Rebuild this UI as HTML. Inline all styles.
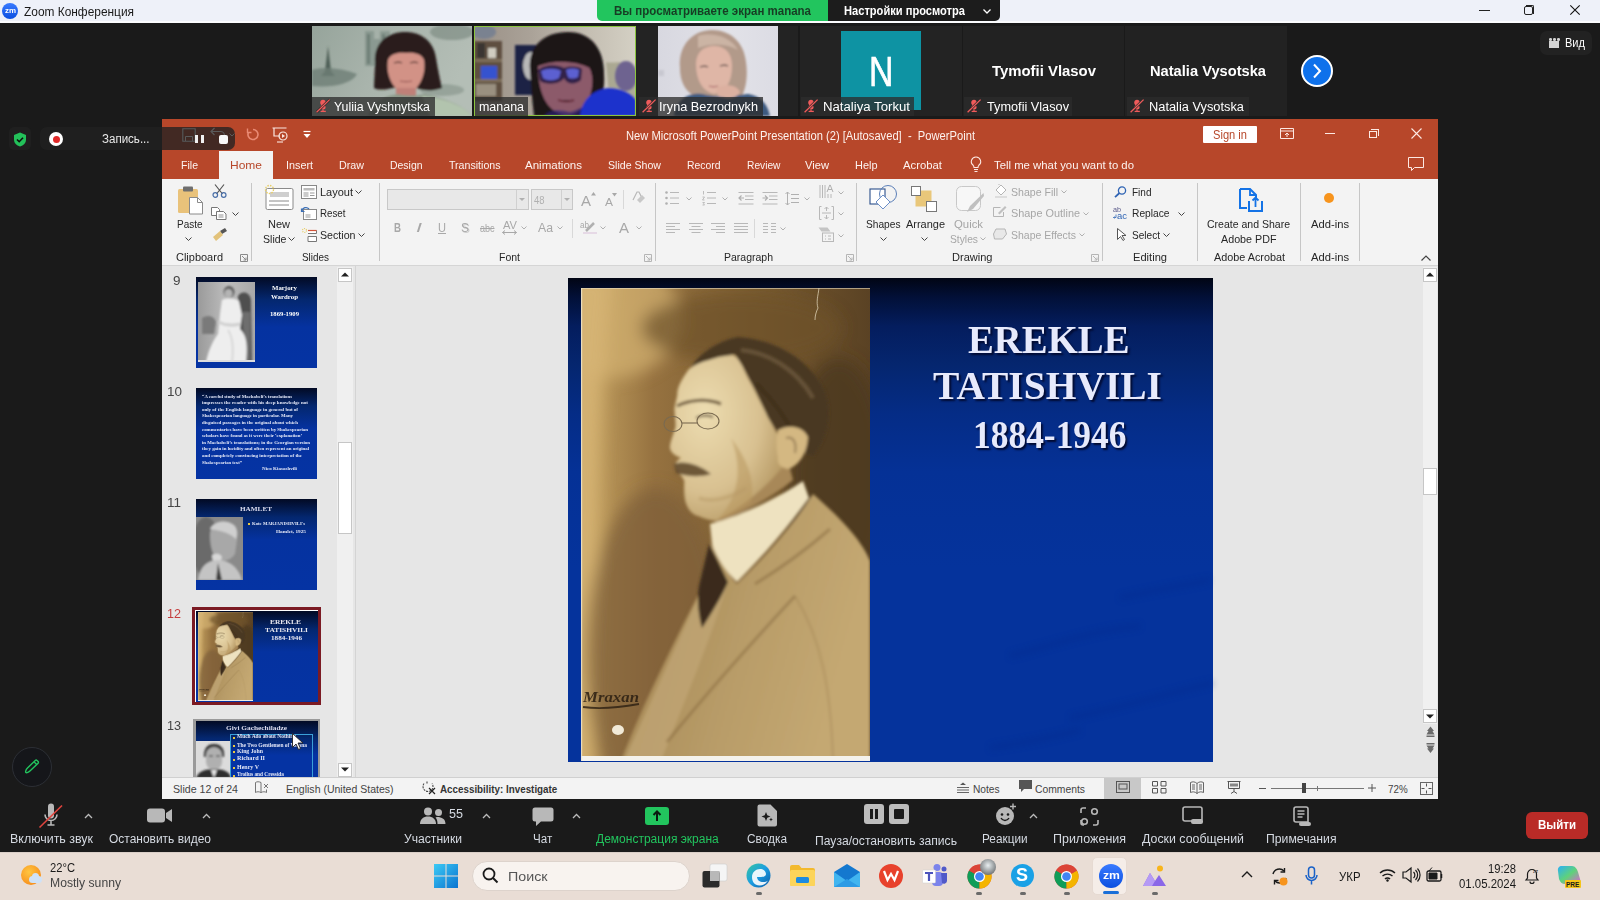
<!DOCTYPE html>
<html><head><meta charset="utf-8">
<style>
*{margin:0;padding:0;box-sizing:border-box}
html,body{width:1600px;height:900px;overflow:hidden}
body{position:relative;background:#1a1a1a;font-family:"Liberation Sans",sans-serif;color:#fff}
.a{position:absolute}
.t{position:absolute;white-space:nowrap;line-height:1;transform-origin:0 0}
svg{position:absolute;overflow:visible}
.lbl{position:absolute;top:97px;height:19px;background:rgba(44,44,44,.77)}
.nm{font-size:12.5px;color:#fff}
.rb{font-size:11px;color:#262626}
.dis{color:#a6a6a6}
.tab{font-size:11.5px;color:#fdf3f0}
.zt{font-size:12.5px;color:#d6dbe3;margin-top:.6px}
</style></head><body>

<!-- ================= Zoom title bar ================= -->
<div class="a" style="left:0;top:0;width:1600px;height:23px;background:#eef1f9"></div>
<div class="a" style="left:0;top:21px;width:1600px;height:2px;background:#fbfcfe"></div>
<div class="a" style="left:2px;top:3px;width:16px;height:16px;border-radius:50%;background:linear-gradient(#3a7bff,#0b4fe0)"></div>
<div class="t" style="left: 4.5px; top: 7px; font-size: 7px; font-weight: bold; color: rgb(255, 255, 255); transform: scaleX(1.13002);">zm</div>
<div class="t" style="left: 24px; top: 5.5px; font-size: 12px; color: rgb(26, 26, 26); transform: scaleX(0.991829);">Zoom Конференция</div>
<!-- window controls -->
<div class="a" style="left:1479px;top:10px;width:11px;height:1px;background:#222"></div>
<div class="a" style="left:1524px;top:6px;width:9px;height:9px;border:1px solid #222;border-radius:2px"></div>
<div class="a" style="left:1525.5px;top:5px;width:8.5px;height:8.5px;border-top:1px solid #222;border-right:1px solid #222;border-radius:0 2px 0 0"></div>
<svg style="left:1570px;top:5px" width="10" height="10"><path d="M0.3 0.3L9.7 9.7M9.7 0.3L0.3 9.7" stroke="#111" stroke-width="1.1"></path></svg>

<!-- green banner -->
<div class="a" style="left:597px;top:0;width:231px;height:21px;background:#22c55e;border-radius:0 0 0 5px"></div>
<div class="a" style="left:828px;top:0;width:172px;height:21px;background:#1c1c1c;border-radius:0 0 5px 0"></div>
<div class="t" style="left: 614px; top: 5px; font-size: 12px; font-weight: bold; color: rgb(23, 61, 36); transform: scaleX(0.958565);">Вы просматриваете экран manana</div>
<div class="t" style="left: 844px; top: 5px; font-size: 12px; font-weight: bold; color: rgb(255, 255, 255); transform: scaleX(0.925762);">Настройки просмотра</div>
<svg style="left:983px;top:9px" width="8" height="5"><path d="M0.5 0.5L4 4L7.5 0.5" stroke="#fff" stroke-width="1.3" fill="none"></path></svg>

<!-- ================= participant strip ================= -->
<div id="tiles">
<!-- Yuliia -->
<svg style="left:312px;top:26px;overflow:hidden" width="160" height="90">
  <defs><linearGradient id="yb" x1="0" y1="0" x2="1" y2="0.3"><stop offset="0" stop-color="#96a49b"></stop><stop offset=".5" stop-color="#a9b4ac"></stop><stop offset="1" stop-color="#b4beb6"></stop></linearGradient></defs>
  <rect width="160" height="90" fill="url(#yb)"></rect>
  <g filter="url(#bl1)">
    <path d="M16 20L13 45h6z" fill="#4e5e56"></path><path d="M9 50l7-8 7 8z" fill="#4e5e56"></path>
    <path d="M0 44C10 40 30 42 45 48 40 58 20 62 0 60z" fill="#6e7e75" opacity=".8"></path>
    <path d="M53 40V5h9v8h6V5h10v35z" fill="#7f8f86" opacity=".7"></path>
    <path d="M55 8h3v30h-3zM70 8h3v30h-3z" fill="#62726a" opacity=".7"></path>
    <ellipse cx="140" cy="6" rx="22" ry="8" fill="#76867d" opacity=".6"></ellipse>
    <ellipse cx="130" cy="64" rx="22" ry="6" fill="#7a8a80" opacity=".5"></ellipse>
    <path d="M63 36C62 16 76 6 93 6C110 6 122 16 124 32C126 44 128 54 130 62C118 66 110 64 104 62H80C72 64 66 64 62 62C62 54 63 46 63 36z" fill="#2a1f1c"></path>
    <path d="M76 34C78 28 86 26 94 27C102 26 110 28 112 34C114 46 110 62 94 70C78 62 74 46 76 34z" fill="#d29286"></path>
    <path d="M82 37c3-1 6-1 8 0M98 37c3-1 6-1 8 0" stroke="#5a3a34" stroke-width="1.2"></path>
    <path d="M88 55c4 1 8 1 12 0" stroke="#a05a58" stroke-width="1.1"></path>
    <path d="M84 62h20v8H84z" fill="#c08078"></path>
    <path d="M56 90C60 76 72 70 86 68C96 70 104 70 112 68C130 72 150 78 160 90z" fill="#8c9a8a"></path>
    <path d="M110 70C130 72 150 78 160 90H118z" fill="#b2c4ae"></path>
  </g>
</svg>
<!-- manana -->
<svg style="left:474px;top:26px;overflow:hidden" width="162" height="90">
  <defs><linearGradient id="mb" x1="0" y1="0" x2="1" y2="0"><stop offset="0" stop-color="#9a9086"></stop><stop offset=".35" stop-color="#aaa298"></stop><stop offset=".7" stop-color="#c4beb2"></stop><stop offset="1" stop-color="#d4d0c4"></stop></linearGradient></defs>
  <rect width="162" height="90" fill="url(#mb)"></rect>
  <g filter="url(#bl1)">
    <ellipse cx="10" cy="6" rx="12" ry="7" fill="#7a8290"></ellipse>
    <rect x="0" y="15" width="28" height="60" fill="#5e5040"></rect>
    <path d="M1 33h27v3H1zM1 53h27v3H1z" fill="#7e6e5a"></path>
    <rect x="3" y="17" width="8" height="15" fill="#3a3430"></rect>
    <rect x="14" y="22" width="8" height="10" fill="#d0ccc0"></rect>
    <rect x="7" y="40" width="16" height="13" fill="#3553cf"></rect>
    <rect x="2" y="58" width="20" height="12" fill="#9a9080"></rect>
    <rect x="41" y="19" width="21" height="50" fill="#1c2244"></rect>
    <ellipse cx="57" cy="40" rx="8" ry="14" fill="#b8b8b8"></ellipse>
    <path d="M132 36c6 2 12-2 18 2 6 4 10 10 12 18v24h-26z" fill="#8a8a6a" opacity=".5"></path>
    <ellipse cx="152" cy="50" rx="11" ry="15" fill="#6e6490"></ellipse>
    <path d="M56 44C54 20 70 6 94 6C118 6 130 24 130 48C131 62 128 74 122 90H60C58 74 57 58 56 44z" fill="#1b1418"></path>
    <path d="M64 40C66 30 76 28 92 30C106 30 116 36 118 50C120 68 112 86 94 90C76 88 64 72 64 40z" fill="#8c5a6a"></path>
    <path d="M62 34C72 26 96 24 118 34L116 42C100 34 80 34 64 40z" fill="#1b1418"></path>
    <path d="M64 44C70 38 84 38 90 42 96 40 104 40 108 43L107 54C102 59 93 59 90 52 86 59 72 59 66 55z" fill="#2e1e48" opacity=".95"></path>
    <path d="M67 45c6-3 15-3 20 0l-2 7c-5 3-12 3-16 0zM92 44c4-2 9-2 13 0l-1 7c-4 2-8 2-10 0z" fill="#6068e0" opacity=".9"></path>
    <path d="M84 74c6 2 12 2 16 0" stroke="#6a3040" stroke-width="2"></path>
    <path d="M70 90C76 82 88 84 96 86C104 84 110 80 112 78V90z" fill="#2a2070" opacity=".7"></path>
    <path d="M106 90C108 72 120 64 134 62C148 62 158 68 162 74V90z" fill="#1f30cc"></path>
    <rect x="0" y="0" width="162" height="90" fill="none"></rect>
  </g>
</svg>
<div class="a" style="left:474px;top:26px;width:162px;height:90px;border:1px solid #8bc53f"></div>
<!-- Iryna -->
<div class="a" style="left:636px;top:26px;width:162px;height:90px;background:#232323"></div>
<svg style="left:658px;top:26px;overflow:hidden" width="120" height="90">
  <defs><linearGradient id="ib" x1="0" y1="0" x2="1" y2="0"><stop offset="0" stop-color="#d8d8e0"></stop><stop offset=".6" stop-color="#e2e2e8"></stop><stop offset="1" stop-color="#dcdce4"></stop></linearGradient></defs>
  <rect width="120" height="90" fill="url(#ib)"></rect>
  <g filter="url(#bl1)">
    <path d="M22 42C20 18 36 4 54 4C72 4 86 16 88 36C90 50 88 62 84 70H36C26 64 22 54 22 42z" fill="#b29a8a"></path>
    <path d="M40 10C54 6 72 10 80 24C70 18 56 16 40 22z" fill="#cbb4a4"></path>
    <path d="M38 38C38 26 46 20 56 20C68 20 74 28 74 40C74 56 68 66 56 68C46 66 38 56 38 38z" fill="#dfb6a6"></path>
    <path d="M42 41c3-1 6-1 8 0M62 40c3-1 6-1 8 0" stroke="#5a4a48" stroke-width="1.3"></path>
    <path d="M51 60c3 1 6 1 9 0" stroke="#b07070" stroke-width="1.3"></path>
    <path d="M16 90C18 76 28 66 44 68C58 72 76 70 90 68C104 70 110 80 112 90z" fill="#3e5a80"></path>
    <path d="M58 62C66 58 78 58 82 66C80 72 70 74 60 70z" fill="#dcb0a0"></path>
    <rect x="0" y="44" width="6" height="6" fill="#c8c8d0"></rect>
  </g>
</svg>
<!-- Nataliya -->
<div class="a" style="left:800px;top:26px;width:162px;height:90px;background:#232323"></div>
<div class="a" style="left:841px;top:31px;width:80px;height:79px;background:#0e93a3"></div>
<div class="t" style="left: 869px; top: 51px; font-size: 42.5px; color: rgb(255, 255, 255); -webkit-text-stroke: 0.6px rgb(255, 255, 255); transform: scaleX(0.797964);">N</div>
<!-- Tymofii / Natalia -->
<div class="a" style="left:963px;top:26px;width:161px;height:90px;background:#222"></div>
<div class="a" style="left:1125px;top:26px;width:162px;height:90px;background:#222"></div>
<div class="t" style="left: 992px; top: 63px; font-size: 15.5px; font-weight: bold; color: rgb(255, 255, 255); transform: scaleX(0.960739);">Tymofii Vlasov</div>
<div class="t" style="left: 1149.5px; top: 63px; font-size: 15.5px; font-weight: bold; color: rgb(255, 255, 255); transform: scaleX(0.945853);">Natalia Vysotska</div>

<!-- labels -->
<div class="lbl" style="left:312px;width:123px"></div>
<div class="lbl" style="left:475px;width:53px"></div>
<div class="lbl" style="left:639px;width:124px"></div>
<div class="lbl" style="left:801px;width:113px"></div>
<div class="lbl" style="left:964px;width:108px"></div>
<div class="lbl" style="left:1127px;width:122px"></div>
<div class="t nm" style="left: 334px; top: 100.8px; transform: scaleX(0.991607);">Yuliia Vyshnytska</div>
<div class="t nm" style="left: 479px; top: 100.8px; transform: scaleX(0.995851);">manana</div>
<div class="t nm" style="left: 659px; top: 100.8px; transform: scaleX(1.01767);">Iryna Bezrodnykh</div>
<div class="t nm" style="left: 823px; top: 100.8px; transform: scaleX(1.05514);">Nataliya Torkut</div>
<div class="t nm" style="left: 987px; top: 100.8px; transform: scaleX(1.01745);">Tymofii Vlasov</div>
<div class="t nm" style="left: 1149px; top: 100.8px; transform: scaleX(1.02547);">Natalia Vysotska</div>
</div>
<!-- mute icons -->
<svg style="left:316px;top:99px" width="14" height="14"><use href="#mute"></use></svg>
<svg style="left:642px;top:99px" width="14" height="14"><use href="#mute"></use></svg>
<svg style="left:804px;top:99px" width="14" height="14"><use href="#mute"></use></svg>
<svg style="left:967px;top:99px" width="14" height="14"><use href="#mute"></use></svg>
<svg style="left:1130px;top:99px" width="14" height="14"><use href="#mute"></use></svg>

<!-- next arrow -->
<div class="a" style="left:1301px;top:55px;width:32px;height:32px;border-radius:50%;background:#0e71eb;border:2.4px solid #fff"></div>
<svg style="left:1312px;top:63px" width="10" height="16"><path d="M2 1.5L8 8L2 14.5" stroke="#fff" stroke-width="2" fill="none"></path></svg>

<!-- Вид -->
<div class="a" style="left:1540px;top:31px;width:52px;height:24px;border-radius:7px;background:#222"></div>
<div class="a" style="left:1549px;top:41px;width:10px;height:7px;background:#d4d4d4"></div>
<div class="a" style="left:1549px;top:38px;width:2.5px;height:2.5px;background:#d4d4d4;border-radius:50%"></div>
<div class="a" style="left:1553px;top:38px;width:2.5px;height:2.5px;background:#d4d4d4;border-radius:50%"></div>
<div class="a" style="left:1557px;top:38px;width:2.5px;height:2.5px;background:#d4d4d4;border-radius:50%"></div>
<div class="t" style="left: 1564.5px; top: 37px; font-size: 12.5px; color: rgb(255, 255, 255); transform: scaleX(0.883978);">Вид</div>

<!-- ================= PowerPoint window ================= -->
<div class="a" style="left:162px;top:119px;width:1276px;height:680px;background:#e6e6e6"></div>
<!-- title bar + tabs bg -->
<div class="a" style="left:162px;top:119px;width:1276px;height:60px;background:#b7472a"></div>
<!-- QAT icons -->
<svg style="left:182px;top:128px" width="14" height="14"><path d="M1 1h10l2 2v10H1z" stroke="#7a4a3e" stroke-width="1.2" fill="none"></path><path d="M3.5 13V9h7v4" stroke="#7a4a3e" stroke-width="1.1" fill="none"></path></svg>
<svg style="left:246px;top:127px" width="14" height="15"><path d="M7 2.5a5 5 0 1 1-4.6 3" stroke="#e98a74" stroke-width="1.6" fill="none"></path><path d="M1.5 1.5v4h4" stroke="#e98a74" stroke-width="1.4" fill="none"></path></svg>
<svg style="left:272px;top:127px" width="17" height="16"><path d="M0.5 1h14M2 1v8h6" stroke="#fbe7e1" stroke-width="1.2" fill="none"></path><circle cx="11" cy="9" r="4" stroke="#fbe7e1" stroke-width="1.2" fill="none"></circle><path d="M10 7v4l3-2z" fill="#fbe7e1"></path><path d="M5 15h6" stroke="#fbe7e1" stroke-width="1.1"></path></svg>
<svg style="left:303px;top:131px" width="9" height="9"><path d="M0.5 0.5h7" stroke="#fff" stroke-width="1.2"></path><path d="M0.5 3h7l-3.5 4z" fill="#fff"></path></svg>
<div class="t" style="left: 626px; top: 129.5px; font-size: 12px; color: rgb(253, 242, 238); transform: scaleX(0.931055);">New Microsoft PowerPoint Presentation (2) [Autosaved]&nbsp;&nbsp;-&nbsp;&nbsp;PowerPoint</div>
<!-- sign in -->
<div class="a" style="left:1203px;top:126px;width:54px;height:17px;background:#fff;border-radius:1px"></div>
<div class="t" style="left: 1212.5px; top: 129px; font-size: 12px; color: rgb(183, 71, 42); transform: scaleX(0.926352);">Sign in</div>
<svg style="left:1280px;top:128px" width="14" height="11"><path d="M0.5 0.5h13v10h-13zM0.5 3h13" stroke="#fde9e3" stroke-width="1" fill="none"></path><path d="M7 9V5M5 7l2-2 2 2" stroke="#fde9e3" stroke-width="1" fill="none"></path></svg>
<div class="a" style="left:1325px;top:133px;width:10px;height:1px;background:#fde9e3"></div>
<div class="a" style="left:1369px;top:131px;width:8px;height:7px;border:1px solid #fde9e3"></div>
<div class="a" style="left:1371px;top:129px;width:8px;height:7px;border-top:1px solid #fde9e3;border-right:1px solid #fde9e3"></div>
<svg style="left:1411px;top:128px" width="11" height="11"><path d="M0.5 0.5L10.5 10.5M10.5 0.5L0.5 10.5" stroke="#fde9e3" stroke-width="1.1"></path></svg>
<!-- tabs -->
<div class="a" style="left:219px;top:151px;width:54px;height:28px;background:#f3f3f3"></div>
<div class="t tab" style="top: 160px; left: 181px; transform: scaleX(0.917369);">File</div>
<div class="t tab" style="top: 160px; left: 230px; color: rgb(183, 71, 42); transform: scaleX(1.04277);">Home</div>
<div class="t tab" style="top: 160px; left: 286px; transform: scaleX(0.93862);">Insert</div>
<div class="t tab" style="top: 160px; left: 339px; transform: scaleX(0.931315);">Draw</div>
<div class="t tab" style="top: 160px; left: 389.5px; transform: scaleX(0.907504);">Design</div>
<div class="t tab" style="top: 160px; left: 448.5px; transform: scaleX(0.922474);">Transitions</div>
<div class="t tab" style="top: 160px; left: 525px; transform: scaleX(1.00192);">Animations</div>
<div class="t tab" style="top: 160px; left: 608px; transform: scaleX(0.920988);">Slide Show</div>
<div class="t tab" style="top: 160px; left: 686.5px; transform: scaleX(0.903498);">Record</div>
<div class="t tab" style="top: 160px; left: 746.5px; transform: scaleX(0.888152);">Review</div>
<div class="t tab" style="top: 160px; left: 805px; transform: scaleX(0.970923);">View</div>
<div class="t tab" style="top: 160px; left: 854.5px; transform: scaleX(0.951123);">Help</div>
<div class="t tab" style="top: 160px; left: 903px; transform: scaleX(0.983839);">Acrobat</div>
<svg style="left:970px;top:156px" width="12" height="17"><path d="M6 1a4.6 4.6 0 0 0-2.8 8.3c.6.6.8 1.2.8 2.2h4c0-1 .2-1.6.8-2.2A4.6 4.6 0 0 0 6 1z" stroke="#fde9e3" stroke-width="1.1" fill="none"></path><path d="M4 13.5h4M4.5 15.5h3" stroke="#fde9e3" stroke-width="1"></path></svg>
<div class="t tab" style="top: 160px; left: 994px; transform: scaleX(0.986458);">Tell me what you want to do</div>
<svg style="left:1408px;top:157px" width="17" height="14"><path d="M0.5 0.5h15v10h-9l-3 3v-3h-3z" stroke="#fde9e3" stroke-width="1" fill="none"></path></svg>

<!-- ribbon -->
<div class="a" style="left:162px;top:179px;width:1276px;height:86px;background:#f3f3f3"></div>
<div class="a" style="left:162px;top:265px;width:1276px;height:1px;background:#d5d5d5"></div>
<!-- separators -->
<div class="a" style="left:251px;top:183px;width:1px;height:78px;background:#c6c6c6"></div>
<div class="a" style="left:379px;top:183px;width:1px;height:78px;background:#c6c6c6"></div>
<div class="a" style="left:655px;top:183px;width:1px;height:78px;background:#c6c6c6"></div>
<div class="a" style="left:856px;top:183px;width:1px;height:78px;background:#c6c6c6"></div>
<div class="a" style="left:1102px;top:183px;width:1px;height:78px;background:#c6c6c6"></div>
<div class="a" style="left:1197px;top:183px;width:1px;height:78px;background:#c6c6c6"></div>
<div class="a" style="left:1300px;top:183px;width:1px;height:78px;background:#c6c6c6"></div>
<div class="a" style="left:1359px;top:183px;width:1px;height:78px;background:#c6c6c6"></div>
<!-- group labels -->
<div class="t rb" style="left: 175.5px; top: 251.5px; transform: scaleX(0.998009);">Clipboard</div>
<div class="t rb" style="left: 301.5px; top: 251.5px; transform: scaleX(0.900938);">Slides</div>
<div class="t rb" style="left: 499px; top: 251.5px; transform: scaleX(0.953868);">Font</div>
<div class="t rb" style="left: 723.5px; top: 251.5px; transform: scaleX(0.953771);">Paragraph</div>
<div class="t rb" style="left: 951.5px; top: 251.5px; transform: scaleX(1.00348);">Drawing</div>
<div class="t rb" style="left: 1133px; top: 251.5px; transform: scaleX(1.01068);">Editing</div>
<div class="t rb" style="left: 1213.5px; top: 251.5px; transform: scaleX(0.983763);">Adobe Acrobat</div>
<div class="t rb" style="left: 1310.5px; top: 251.5px; transform: scaleX(1.01885);">Add-ins</div>
<!-- launchers -->
<svg style="left:240px;top:254px" width="8" height="8"><path d="M0.5 0.5h7v7h-7z" stroke="#8a8a8a" stroke-width="1" fill="none"></path><path d="M2 2l4 4M6 3.5V6H3.5" stroke="#8a8a8a" stroke-width="1" fill="none"></path></svg>
<svg style="left:644px;top:254px" width="8" height="8"><path d="M0.5 0.5h7v7h-7z" stroke="#b5b5b5" stroke-width="1" fill="none"></path><path d="M2 2l4 4M6 3.5V6H3.5" stroke="#b5b5b5" stroke-width="1" fill="none"></path></svg>
<svg style="left:846px;top:254px" width="8" height="8"><path d="M0.5 0.5h7v7h-7z" stroke="#b5b5b5" stroke-width="1" fill="none"></path><path d="M2 2l4 4M6 3.5V6H3.5" stroke="#b5b5b5" stroke-width="1" fill="none"></path></svg>
<svg style="left:1091px;top:254px" width="8" height="8"><path d="M0.5 0.5h7v7h-7z" stroke="#b5b5b5" stroke-width="1" fill="none"></path><path d="M2 2l4 4M6 3.5V6H3.5" stroke="#b5b5b5" stroke-width="1" fill="none"></path></svg>
<svg style="left:1421px;top:255px" width="10" height="6"><path d="M0.5 5.5L5 1l4.5 4.5" stroke="#444" stroke-width="1.2" fill="none"></path></svg>
<!-- Clipboard -->
<svg style="left:177px;top:185px" width="28" height="30"><rect x="1" y="4" width="20" height="24" rx="1.5" fill="#e9c27a"></rect><rect x="6" y="1.5" width="10" height="5" rx="1" fill="#6e6e6e"></rect><path d="M12.5 12.5h8l5 5v11.5h-13z" fill="#fff" stroke="#8a8a8a" stroke-width="1"></path><path d="M20.5 12.5v5h5" stroke="#8a8a8a" stroke-width="1" fill="none"></path></svg>
<div class="t rb" style="left: 176.5px; top: 218.5px; transform: scaleX(0.906163);">Paste</div>
<svg style="left:185px;top:237px" width="7" height="4"><path d="M0.5 0.5L3.5 3.5L6.5 0.5" stroke="#444" stroke-width="1" fill="none"></path></svg>
<svg style="left:212px;top:184px" width="15" height="14"><path d="M3 0.5L10.5 10M12 0.5L4.5 10" stroke="#555" stroke-width="1.2"></path><circle cx="3.3" cy="11" r="2.3" stroke="#4a6fa8" stroke-width="1.2" fill="none"></circle><circle cx="11.7" cy="11" r="2.3" stroke="#4a6fa8" stroke-width="1.2" fill="none"></circle></svg>
<svg style="left:211px;top:207px" width="16" height="13"><path d="M0.5 0.5h6l2 2v6h-8z" stroke="#777" stroke-width="1" fill="#fff"></path><path d="M5.5 4.5h7l2.5 2.5v5.5h-9.5z" stroke="#777" stroke-width="1" fill="#fff"></path><path d="M7.5 8h5M7.5 10h5" stroke="#777" stroke-width=".8"></path></svg>
<svg style="left:232px;top:212px" width="7" height="4"><path d="M0.5 0.5L3.5 3.5L6.5 0.5" stroke="#444" stroke-width="1" fill="none"></path></svg>
<svg style="left:212px;top:228px" width="15" height="13"><path d="M8 3l5-3 2 3-5 3z" fill="#555"></path><path d="M1 9l7-6 3 4-7 6z" fill="#e2c27a"></path></svg>
<!-- Slides -->
<svg style="left:264px;top:184px" width="30" height="26"><rect x="2" y="4.5" width="27" height="21" rx="1.5" fill="#fff" stroke="#8a8a8a" stroke-width="1"></rect><rect x="6" y="8" width="19" height="5" fill="#cfcfcf"></rect><path d="M5 17h20M5 21h20" stroke="#8a8a8a" stroke-width="1"></path><circle cx="5.5" cy="5.5" r="4" fill="none" stroke="#e8cf6a" stroke-width="1.4" stroke-dasharray="1.5 1.2"></circle></svg>
<div class="t rb" style="left: 268px; top: 218.5px; transform: scaleX(0.99929);">New</div>
<div class="t rb" style="left: 262.5px; top: 233.5px; transform: scaleX(0.960409);">Slide</div>
<svg style="left:288px;top:237px" width="7" height="4"><path d="M0.5 0.5L3.5 3.5L6.5 0.5" stroke="#444" stroke-width="1" fill="none"></path></svg>
<svg style="left:301px;top:185px" width="16" height="14"><rect x="0.5" y="0.5" width="15" height="13" fill="#fff" stroke="#888"></rect><rect x="2.5" y="3" width="11" height="2.5" fill="#bbb"></rect><rect x="2.5" y="7" width="5" height="5" fill="#ccc"></rect><path d="M9 8h4.5M9 10.5h4.5" stroke="#999"></path></svg>
<div class="t rb" style="left: 319.5px; top: 186.5px; transform: scaleX(0.999054);">Layout</div>
<svg style="left:355px;top:190px" width="7" height="4"><path d="M0.5 0.5L3.5 3.5L6.5 0.5" stroke="#444" stroke-width="1" fill="none"></path></svg>
<svg style="left:301px;top:206px" width="16" height="14"><rect x="2.5" y="3.5" width="13" height="10" fill="#fff" stroke="#888"></rect><rect x="4.5" y="8" width="5" height="4" fill="#ccc"></rect><path d="M1 5a4 4 0 0 1 7-2" stroke="#3b6fb6" stroke-width="1.3" fill="none"></path><path d="M0.5 2.5v3h3" stroke="#3b6fb6" stroke-width="1.2" fill="none"></path></svg>
<div class="t rb" style="left: 319.5px; top: 208px; transform: scaleX(0.886957);">Reset</div>
<svg style="left:302px;top:228px" width="15" height="14"><circle cx="2.5" cy="2.5" r="2" fill="none" stroke="#e8cf6a" stroke-width="1.2" stroke-dasharray="1 1"></circle><path d="M6 2.5h8.5v3H6M6 8.5h8.5v5H6z" stroke="#777" stroke-width="1" fill="#fff"></path><path d="M6 2.5h8.5" stroke="#d2553a" stroke-width="1.2"></path></svg>
<div class="t rb" style="left: 319.5px; top: 229.5px; transform: scaleX(0.96722);">Section</div>
<svg style="left:358px;top:233px" width="7" height="4"><path d="M0.5 0.5L3.5 3.5L6.5 0.5" stroke="#444" stroke-width="1" fill="none"></path></svg>

<!-- Font -->
<div class="a" style="left:387px;top:189px;width:142px;height:21px;background:#e8e8e8;border:1px solid #c8c8c8"></div>
<div class="a" style="left:516px;top:190px;width:1px;height:19px;background:#d0d0d0"></div>
<svg style="left:519px;top:198px" width="6" height="4"><path d="M0 0h6L3 3z" fill="#b0b0b0"></path></svg>
<div class="a" style="left:531px;top:189px;width:42px;height:21px;background:#e8e8e8;border:1px solid #c8c8c8"></div>
<div class="a" style="left:561px;top:190px;width:1px;height:19px;background:#d0d0d0"></div>
<svg style="left:564px;top:198px" width="6" height="4"><path d="M0 0h6L3 3z" fill="#b0b0b0"></path></svg>
<div class="t" style="left: 534px; top: 195px; font-size: 11px; color: rgb(176, 176, 176); transform: scaleX(0.857143);">48</div>
<div class="t" style="left: 581px; top: 194px; font-size: 14px; color: rgb(168, 168, 168); transform: scaleX(1.07023);">A</div>
<svg style="left:591px;top:192px" width="5" height="4"><path d="M0 3.5L2.5 0 5 3.5z" fill="#a8a8a8"></path></svg>
<div class="t" style="left: 605px; top: 197px; font-size: 11px; color: rgb(168, 168, 168); transform: scaleX(1.08936);">A</div>
<svg style="left:612px;top:193px" width="5" height="4"><path d="M0 0L2.5 3.5 5 0z" fill="#a8a8a8"></path></svg>
<div class="a" style="left:623px;top:190px;width:1px;height:19px;background:#d8d8d8"></div>
<svg style="left:632px;top:191px" width="13" height="14"><path d="M1 9L5 1h2l3 6" stroke="#b8b8b8" stroke-width="1.2" fill="none"></path><path d="M5 9l5-5 3 3-5 5z" fill="#c8c8c8"></path></svg>
<div class="t" style="left: 394px; top: 222px; font-size: 12px; font-weight: bold; color: rgb(168, 168, 168); transform: scaleX(0.807207);">B</div>
<div class="t" style="left: 416px; top: 222px; font-size: 12px; font-style: italic; color: rgb(168, 168, 168); transform: scaleX(1.79439);">I</div>
<div class="t" style="left: 438px; top: 222px; font-size: 12px; color: rgb(168, 168, 168); text-decoration: underline; transform: scaleX(0.922523);">U</div>
<div class="t" style="left: 461px; top: 222px; font-size: 12px; color: rgb(168, 168, 168); text-shadow: rgb(204, 204, 204) 1px 1px 0px; transform: scaleX(0.998051);">S</div>
<div class="t" style="left: 480px; top: 223px; font-size: 11px; color: rgb(168, 168, 168); text-decoration: line-through; transform: scaleX(0.816901);">abc</div>
<div class="t" style="left: 502.5px; top: 221px; font-size: 10px; color: rgb(168, 168, 168); transform: scaleX(1.11029);">AV</div>
<svg style="left:502px;top:230px" width="15" height="5"><path d="M0.5 2.5h14M3 0.5L0.5 2.5 3 4.5M12 0.5l2.5 2 -2.5 2" stroke="#a8a8a8" stroke-width="1" fill="none"></path></svg>
<div class="t" style="left: 537.5px; top: 222px; font-size: 12px; color: rgb(168, 168, 168); transform: scaleX(1.02128);">Aa</div>
<div class="a" style="left:572px;top:219px;width:1px;height:19px;background:#d8d8d8"></div>
<div class="t" style="left: 580px; top: 221px; font-size: 9px; color: rgb(168, 168, 168); transform: scaleX(0.898596);">ab</div>
<svg style="left:583px;top:222px" width="12" height="12"><path d="M11 1L3 9" stroke="#b0b0b0" stroke-width="2.5"></path><rect x="0" y="10" width="14" height="2" fill="#e6d9e6"></rect></svg>
<div class="t" style="left: 619px; top: 221px; font-size: 14px; color: rgb(168, 168, 168); transform: scaleX(1.07023);">A</div>
<svg style="left:521px;top:226px" width="6" height="4"><path d="M0.5 0.5L3 3 5.5 0.5" stroke="#b0b0b0" fill="none"></path></svg>
<svg style="left:557px;top:226px" width="6" height="4"><path d="M0.5 0.5L3 3 5.5 0.5" stroke="#b0b0b0" fill="none"></path></svg>
<svg style="left:600px;top:226px" width="6" height="4"><path d="M0.5 0.5L3 3 5.5 0.5" stroke="#b0b0b0" fill="none"></path></svg>
<svg style="left:636px;top:226px" width="6" height="4"><path d="M0.5 0.5L3 3 5.5 0.5" stroke="#b0b0b0" fill="none"></path></svg>
<!-- Paragraph -->
<svg style="left:665px;top:191px" width="15" height="15"><g fill="#b0b0b0"><circle cx="1.5" cy="1.5" r="1.3"></circle><circle cx="1.5" cy="7" r="1.3"></circle><circle cx="1.5" cy="12.5" r="1.3"></circle></g><path d="M5 1.5h9M5 7h9M5 12.5h9" stroke="#b8b8b8" stroke-width="1"></path></svg>
<svg style="left:702px;top:191px" width="15" height="15"><path d="M1.5 0v3.5M.5 6h2l-2 3h2M.5 11.5h2l-1 1.3 1 1.2h-2" stroke="#b0b0b0" stroke-width=".8" fill="none"></path><path d="M5 1.5h9M5 7h9M5 12.5h9" stroke="#b8b8b8" stroke-width="1"></path></svg>
<svg style="left:738px;top:192px" width="16" height="13"><path d="M0.5 0.5h15M7 4h8.5M7 7.5h8.5M0.5 12h15" stroke="#b8b8b8" stroke-width="1.1"></path><path d="M1 6h5M3.5 3.5L1 6l2.5 2.5" stroke="#b0b0b0" stroke-width="1.2" fill="none"></path></svg>
<svg style="left:762px;top:192px" width="16" height="13"><path d="M0.5 0.5h15M7 4h8.5M7 7.5h8.5M0.5 12h15" stroke="#b8b8b8" stroke-width="1.1"></path><path d="M0.5 6h5M3 3.5L5.5 6 3 8.5" stroke="#b0b0b0" stroke-width="1.2" fill="none"></path></svg>
<svg style="left:785px;top:191px" width="14" height="15"><path d="M2.5 1v13M0.5 3l2-2 2 2M0.5 12l2 2 2-2M6 3.5h8M6 7.5h8M6 11.5h8" stroke="#b0b0b0" stroke-width="1" fill="none"></path></svg>
<svg style="left:819px;top:184px" width="15" height="15"><path d="M1 1v13M3.5 1v13M6 1v13" stroke="#b8b8b8" stroke-width="1"></path><path d="M8 8l2.8-7h.4L14 8M9 5.5h4" stroke="#b0b0b0" stroke-width="1" fill="none"></path><path d="M9 10v4M12 10v4" stroke="#b8b8b8" stroke-width="1"></path></svg>
<svg style="left:819px;top:206px" width="15" height="14"><path d="M2.5 0.5h-2v13h2M12.5 0.5h2v13h-2M3 7h9M7.5 1v4M5.5 3l2-2 2 2M7.5 13V9M5.5 11l2 2 2-2" stroke="#b8b8b8" stroke-width="1" fill="none"></path></svg>
<svg style="left:818px;top:227px" width="16" height="15"><path d="M0.5 0.5h9l3 4h-9z" fill="#c4c4c4"></path><rect x="4.5" y="6" width="11" height="8.5" fill="#f3f3f3" stroke="#b8b8b8"></rect><path d="M7 9h1M7 12h1M10 9h3M10 12h3" stroke="#b8b8b8"></path></svg>
<svg style="left:666px;top:223px" width="14" height="10"><path d="M0 0.5h14M0 3.5h9M0 6.5h14M0 9.5h9" stroke="#b8b8b8" stroke-width="1"></path></svg>
<svg style="left:689px;top:223px" width="14" height="10"><path d="M0 0.5h14M2.5 3.5h9M0 6.5h14M2.5 9.5h9" stroke="#b8b8b8" stroke-width="1"></path></svg>
<svg style="left:711px;top:223px" width="14" height="10"><path d="M0 0.5h14M5 3.5h9M0 6.5h14M5 9.5h9" stroke="#b8b8b8" stroke-width="1"></path></svg>
<svg style="left:734px;top:223px" width="14" height="10"><path d="M0 0.5h14M0 3.5h14M0 6.5h14M0 9.5h14" stroke="#b8b8b8" stroke-width="1"></path></svg>
<div class="a" style="left:754px;top:219px;width:1px;height:19px;background:#d8d8d8"></div>
<svg style="left:763px;top:223px" width="13" height="10"><path d="M0 0.5h5M8 0.5h5M0 3.5h5M8 3.5h5M0 6.5h5M8 6.5h5M0 9.5h5M8 9.5h5" stroke="#b8b8b8" stroke-width="1"></path></svg>
<svg style="left:686px;top:197px" width="6" height="4"><path d="M0.5 0.5L3 3 5.5 0.5" stroke="#b0b0b0" fill="none"></path></svg>
<svg style="left:722px;top:197px" width="6" height="4"><path d="M0.5 0.5L3 3 5.5 0.5" stroke="#b0b0b0" fill="none"></path></svg>
<svg style="left:804px;top:197px" width="6" height="4"><path d="M0.5 0.5L3 3 5.5 0.5" stroke="#b0b0b0" fill="none"></path></svg>
<svg style="left:838px;top:191px" width="6" height="4"><path d="M0.5 0.5L3 3 5.5 0.5" stroke="#b0b0b0" fill="none"></path></svg>
<svg style="left:838px;top:212px" width="6" height="4"><path d="M0.5 0.5L3 3 5.5 0.5" stroke="#b0b0b0" fill="none"></path></svg>
<svg style="left:838px;top:234px" width="6" height="4"><path d="M0.5 0.5L3 3 5.5 0.5" stroke="#b0b0b0" fill="none"></path></svg>
<svg style="left:780px;top:227px" width="6" height="4"><path d="M0.5 0.5L3 3 5.5 0.5" stroke="#b0b0b0" fill="none"></path></svg>

<!-- Drawing -->
<svg style="left:869px;top:184px" width="29" height="29"><rect x="1" y="5" width="15" height="15" fill="#fff" stroke="#2b4f8a" stroke-width="1.1"></rect><circle cx="19" cy="10" r="8.5" fill="none" stroke="#5b7fb8" stroke-width="1"></circle><path d="M14 11l7 7-7 7-7-7z" fill="#fff" stroke="#6b8fc8" stroke-width="1"></path></svg>
<div class="t rb" style="left: 866px; top: 218.5px; transform: scaleX(0.924623);">Shapes</div>
<svg style="left:880px;top:237px" width="7" height="4"><path d="M0.5 0.5L3.5 3.5L6.5 0.5" stroke="#444" stroke-width="1" fill="none"></path></svg>
<svg style="left:911px;top:186px" width="27" height="27"><rect x="4.5" y="4.5" width="16" height="16" fill="#e9c77a"></rect><rect x="0.5" y="0.5" width="9" height="9" fill="#fff" stroke="#777"></rect><rect x="15.5" y="15.5" width="10" height="10" fill="#fff" stroke="#777"></rect></svg>
<div class="t rb" style="left: 906px; top: 218.5px; transform: scaleX(0.996407);">Arrange</div>
<svg style="left:921px;top:237px" width="7" height="4"><path d="M0.5 0.5L3.5 3.5L6.5 0.5" stroke="#444" stroke-width="1" fill="none"></path></svg>
<svg style="left:956px;top:186px" width="29" height="28"><rect x="0.5" y="0.5" width="24" height="24" rx="5" fill="#f7f7f7" stroke="#c8c8c8"></rect><path d="M27.5 7L14 20l-3 6 6-3L28 10z" fill="#c0c0c0"></path></svg>
<div class="t rb dis" style="left: 954px; top: 218.5px; transform: scaleX(1.03111);">Quick</div>
<div class="t rb dis" style="left: 949.5px; top: 233.5px; transform: scaleX(0.934307);">Styles</div>
<svg style="left:980px;top:237px" width="6" height="4"><path d="M0.5 0.5L3 3 5.5 0.5" stroke="#b0b0b0" fill="none"></path></svg>
<svg style="left:994px;top:184px" width="14" height="14"><path d="M2 6l5-5 5 5-5 5z" fill="#fff" stroke="#b5b5b5"></path><path d="M5 1V0" stroke="#b5b5b5"></path><path d="M1 13h12" stroke="#ddd" stroke-width="2"></path></svg>
<div class="t rb dis" style="left: 1011px; top: 186.5px; transform: scaleX(0.960715);">Shape Fill</div>
<svg style="left:1061px;top:190px" width="6" height="4"><path d="M0.5 0.5L3 3 5.5 0.5" stroke="#b0b0b0" fill="none"></path></svg>
<svg style="left:993px;top:205px" width="14" height="12"><path d="M0.5 2.5h7M0.5 2.5v9h10V7" stroke="#b5b5b5" fill="none"></path><path d="M5 8l7-7 1.5 1.5-7 7z" fill="#c0c0c0"></path></svg>
<div class="t rb dis" style="left: 1011px; top: 208px; transform: scaleX(0.989691);">Shape Outline</div>
<svg style="left:1083px;top:212px" width="6" height="4"><path d="M0.5 0.5L3 3 5.5 0.5" stroke="#b0b0b0" fill="none"></path></svg>
<svg style="left:993px;top:228px" width="14" height="12"><path d="M3 1h9l1.5 5-4 5H1.5L0.5 6z" fill="#e8e8e8" stroke="#b5b5b5"></path></svg>
<div class="t rb dis" style="left: 1011px; top: 229.5px; transform: scaleX(0.951727);">Shape Effects</div>
<svg style="left:1079px;top:233px" width="6" height="4"><path d="M0.5 0.5L3 3 5.5 0.5" stroke="#b0b0b0" fill="none"></path></svg>

<!-- Editing -->
<svg style="left:1114px;top:186px" width="13" height="12"><circle cx="8" cy="4.5" r="3.6" stroke="#2f64b4" stroke-width="1.3" fill="none"></circle><path d="M5.5 7L1 11.2" stroke="#2f64b4" stroke-width="1.8"></path></svg>
<div class="t rb" style="left: 1131.5px; top: 186.5px; transform: scaleX(0.910949);">Find</div>
<div class="t" style="left: 1113px; top: 206px; font-size: 8px; color: rgb(90, 90, 138); transform: scaleX(0.898246);">ab</div>
<div class="t" style="left: 1117px; top: 212px; font-size: 9px; color: rgb(47, 100, 180); transform: scaleX(1.0509);">ac</div>
<svg style="left:1113px;top:214px" width="4" height="5"><path d="M3 0.5v3H0.5M1.5 2.5l-1 1 1 1" stroke="#2f64b4" stroke-width=".8" fill="none"></path></svg>
<div class="t rb" style="left: 1131.5px; top: 208px; transform: scaleX(0.929152);">Replace</div>
<svg style="left:1178px;top:212px" width="7" height="4"><path d="M0.5 0.5L3.5 3.5L6.5 0.5" stroke="#444" stroke-width="1" fill="none"></path></svg>
<svg style="left:1117px;top:228px" width="9" height="13"><path d="M0.5 0.5v11l3-3 2.5 4 1.5-1-2.5-4h4z" stroke="#555" stroke-width="1" fill="#fff"></path></svg>
<div class="t rb" style="left: 1131.5px; top: 229.5px; transform: scaleX(0.915687);">Select</div>
<svg style="left:1163px;top:233px" width="7" height="4"><path d="M0.5 0.5L3.5 3.5L6.5 0.5" stroke="#444" stroke-width="1" fill="none"></path></svg>

<!-- Acrobat -->
<svg style="left:1239px;top:188px" width="24" height="25"><path d="M1 1h10l6 6v4M8 20H1V1" stroke="#1473e6" stroke-width="2" fill="none"></path><path d="M11 1v6h6" stroke="#1473e6" stroke-width="1.8" fill="none"></path><path d="M10 13v10h13V13" stroke="#1473e6" stroke-width="2" fill="none"></path><path d="M16.5 19v-9M13.5 12.5l3-3 3 3" stroke="#1473e6" stroke-width="1.8" fill="none"></path></svg>
<div class="t rb" style="left: 1207px; top: 218.5px; transform: scaleX(0.955739);">Create and Share</div>
<div class="t rb" style="left: 1221px; top: 233.5px; transform: scaleX(0.975824);">Adobe PDF</div>
<!-- Add-ins -->
<div class="a" style="left:1323.5px;top:193px;width:10px;height:10px;border-radius:50%;background:#f7941d"></div>
<div class="t rb" style="left: 1310.5px; top: 218.5px; transform: scaleX(1.01885);">Add-ins</div>
<!-- content area -->
<div class="a" style="left:162px;top:266px;width:1276px;height:512px;background:#e6e6e6"></div>
<!-- thumbnails panel scrollbar -->
<div class="a" style="left:337px;top:267px;width:16px;height:511px;background:#f0f0f0"></div>
<div class="a" style="left:355px;top:266px;width:1px;height:512px;background:#d4d4d4"></div>
<div class="a" style="left:338px;top:268px;width:14px;height:14px;background:#fff;border:1px solid #c6c6c6"></div>
<svg style="left:341px;top:272px" width="8" height="5"><path d="M0 4.5L4 0.5 8 4.5z" fill="#222"></path></svg>
<div class="a" style="left:338px;top:442px;width:14px;height:92px;background:#fff;border:1px solid #c6c6c6"></div>
<div class="a" style="left:338px;top:763px;width:14px;height:14px;background:#fff;border:1px solid #c6c6c6"></div>
<svg style="left:341px;top:767px" width="8" height="5"><path d="M0 0.5L4 4.5 8 0.5z" fill="#222"></path></svg>

<!-- slide numbers -->
<div class="t" style="left: 173px; top: 274px; font-size: 13px; color: rgb(68, 68, 68); transform: scaleX(1.03672);">9</div>
<div class="t" style="left: 166.5px; top: 385px; font-size: 13px; color: rgb(68, 68, 68); transform: scaleX(1.03672);">10</div>
<div class="t" style="left: 166.5px; top: 496px; font-size: 13px; color: rgb(68, 68, 68); transform: scaleX(1.03704);">11</div>
<div class="t" style="left: 166.5px; top: 607px; font-size: 13px; color: rgb(196, 62, 62); transform: scaleX(0.967603);">12</div>
<div class="t" style="left: 166.5px; top: 719px; font-size: 13px; color: rgb(68, 68, 68); transform: scaleX(0.967603);">13</div>

<!-- thumb 9 -->
<div class="a" style="left:196px;top:277px;width:121px;height:91px;background:linear-gradient(#020a24 0%,#04276f 25%,#0532a0 55%,#0533a3 100%)"></div>
<svg style="left:198px;top:282px;overflow:hidden" width="57" height="80"><defs><linearGradient id="t9" x1="0" y1="0" x2="1" y2="0"><stop offset="0" stop-color="#9a9a9a"></stop><stop offset=".5" stop-color="#bdbdbd"></stop><stop offset="1" stop-color="#a8a8a8"></stop></linearGradient></defs><rect width="57" height="80" fill="url(#t9)"></rect><g filter="url(#bl1)"><path d="M40 14c4-6 12-4 13 4l1 62H42z" fill="#505050"></path><path d="M44 30h8v50h-4z" fill="#6e6e6e"></path><path d="M4 36c6-4 12-2 14 4l-2 12H4z" fill="#7a7a7a"></path><ellipse cx="31" cy="10" rx="5.5" ry="6" fill="#5a5a5a"></ellipse><ellipse cx="30.5" cy="11.5" rx="4" ry="4.5" fill="#b4b4b4"></ellipse><path d="M24 18c5-2 12-2 17 1l3 14-2 14c6 6 8 14 6 33H8c2-10 6-20 12-28l2-20z" fill="#eeeeee"></path><path d="M20 40c6 3 14 4 22 2" stroke="#d0d0d0" stroke-width="3" fill="none"></path><path d="M30 48c4 6 6 16 4 32" stroke="#d8d8d8" stroke-width="2" fill="none"></path></g><rect x="0" y="78" width="57" height="2" fill="#ddd"></rect></svg>
<div class="t" style="left: 272px; top: 285px; font-size: 6px; font-family: &quot;Liberation Serif&quot;, serif; font-weight: bold; color: rgb(255, 255, 255); transform: scaleX(1.13636);">Marjory</div>
<div class="t" style="left: 271px; top: 294px; font-size: 6px; font-family: &quot;Liberation Serif&quot;, serif; font-weight: bold; color: rgb(255, 255, 255); transform: scaleX(1.14589);">Wardrop</div>
<div class="t" style="left: 269.5px; top: 311px; font-size: 6px; font-family: &quot;Liberation Serif&quot;, serif; font-weight: bold; color: rgb(255, 255, 255); transform: scaleX(1.11538);">1869-1909</div>

<!-- thumb 10 -->
<div class="a" style="left:196px;top:388px;width:121px;height:91px;background:linear-gradient(#020a24 0%,#04276f 20%,#0532a0 45%,#0533a3 100%)"></div>
<div class="t" style="left: 202px; top: 393.5px; font-family: &quot;Liberation Serif&quot;, serif; font-weight: bold; font-size: 5px; color: rgb(228, 232, 248); transform: scaleX(0.957129);">“A careful study of Machabeli’s translations</div>
<div class="t" style="left: 202px; top: 400.1px; font-family: &quot;Liberation Serif&quot;, serif; font-weight: bold; font-size: 5px; color: rgb(228, 232, 248); transform: scaleX(1.00548);">impresses the reader with his deep knowledge not</div>
<div class="t" style="left: 202px; top: 406.7px; font-family: &quot;Liberation Serif&quot;, serif; font-weight: bold; font-size: 5px; color: rgb(228, 232, 248); transform: scaleX(0.992889);">only of the English language in general but of</div>
<div class="t" style="left: 202px; top: 413.3px; font-family: &quot;Liberation Serif&quot;, serif; font-weight: bold; font-size: 5px; color: rgb(228, 232, 248); transform: scaleX(0.960898);">Shakespearian language in particular. Many</div>
<div class="t" style="left: 202px; top: 419.9px; font-family: &quot;Liberation Serif&quot;, serif; font-weight: bold; font-size: 5px; color: rgb(228, 232, 248); transform: scaleX(0.978656);">disguised passages in the original about which</div>
<div class="t" style="left: 202px; top: 426.5px; font-family: &quot;Liberation Serif&quot;, serif; font-weight: bold; font-size: 5px; color: rgb(228, 232, 248); transform: scaleX(0.97724);">commentaries have been written by Shakespearian</div>
<div class="t" style="left: 202px; top: 433.1px; font-family: &quot;Liberation Serif&quot;, serif; font-weight: bold; font-size: 5px; color: rgb(228, 232, 248); transform: scaleX(0.952664);">scholars have found as it were their ‘explanation’</div>
<div class="t" style="left: 202px; top: 439.7px; font-family: &quot;Liberation Serif&quot;, serif; font-weight: bold; font-size: 5px; color: rgb(228, 232, 248); transform: scaleX(0.973521);">in Machabeli’s translations; in the Georgian version</div>
<div class="t" style="left: 202px; top: 446.3px; font-family: &quot;Liberation Serif&quot;, serif; font-weight: bold; font-size: 5px; color: rgb(228, 232, 248); transform: scaleX(0.976751);">they gain in lucidity and often represent an original</div>
<div class="t" style="left: 202px; top: 452.9px; font-family: &quot;Liberation Serif&quot;, serif; font-weight: bold; font-size: 5px; color: rgb(228, 232, 248); transform: scaleX(0.98857);">and completely convincing interpretation of the</div>
<div class="t" style="left: 202px; top: 459.5px; font-family: &quot;Liberation Serif&quot;, serif; font-weight: bold; font-size: 5px; color: rgb(228, 232, 248); transform: scaleX(0.925859);">Shakespearian text”</div>
<div class="t" style="left: 262px; top: 465.5px; font-family: &quot;Liberation Serif&quot;, serif; font-weight: bold; font-size: 5px; color: rgb(228, 232, 248); transform: scaleX(1.01174);">Nico Kiasashvili</div>
<!-- thumb 11 -->
<div class="a" style="left:196px;top:499px;width:121px;height:91px;background:linear-gradient(#020a24 0%,#04276f 20%,#0532a0 45%,#0533a3 100%)"></div>
<svg style="left:196px;top:517px;overflow:hidden" width="47" height="63"><rect width="47" height="63" fill="#8a8a8a"></rect><g filter="url(#bl1)"><ellipse cx="10" cy="30" rx="14" ry="30" fill="#6a6a6a"></ellipse><path d="M14 18C14 8 22 4 30 5c8 1 12 8 11 18l-2 14c-4 6-10 8-16 6-6-3-9-12-9-25z" fill="#a8a8a8"></path><path d="M14 12C18 4 30 2 38 8c4 4 4 10 2 14-6-6-14-8-26-10z" fill="#cfcfcf"></path><path d="M16 38c4-2 8-2 10 2l-2 6c-4 2-8 0-8-8z" fill="#d8d8d8"></path><path d="M2 63c2-14 10-20 20-20 10 0 20 6 24 20z" fill="#c4c4c4"></path><path d="M22 46l4 17h-6z" fill="#3a3a3a"></path></g></svg>
<div class="t" style="left: 240px; top: 506px; font-size: 6.5px; font-family: &quot;Liberation Serif&quot;, serif; font-weight: bold; color: rgb(221, 221, 238); transform: scaleX(1.10703);">HAMLET</div>
<div class="a" style="left:248px;top:523px;width:2px;height:2px;background:#e8c840"></div>
<div class="t" style="left: 252px; top: 521px; font-family: &quot;Liberation Serif&quot;, serif; font-weight: bold; font-size: 5px; color: rgb(228, 232, 248); transform: scaleX(0.946693);">Kote MARJANISHVILI's</div>
<div class="t" style="left: 276px; top: 529px; font-family: &quot;Liberation Serif&quot;, serif; font-weight: bold; font-size: 5px; color: rgb(228, 232, 248); transform: scaleX(1.05902);">Hamlet, 1925</div>

<!-- thumb 12 (selected) -->
<div class="a" style="left:192px;top:607px;width:129px;height:98px;border:3px solid #7b1a23;background:#fff"></div>
<div class="a" style="left:196px;top:611px;width:122px;height:91px;background:linear-gradient(#020a24 0%,#04276f 20%,#0532a0 45%,#0533a3 100%)"></div>
<svg style="left:198px;top:612px;overflow:hidden" width="55" height="89" viewBox="0 0 289 473" preserveAspectRatio="none"><use href="#photoSym"></use></svg>
<div class="t" style="left: 269.5px; top: 619px; font-size: 6.5px; font-family: &quot;Liberation Serif&quot;, serif; font-weight: bold; color: rgb(232, 232, 240); transform: scaleX(1.14418);">EREKLE</div>
<div class="t" style="left: 264.5px; top: 627px; font-size: 6.5px; font-family: &quot;Liberation Serif&quot;, serif; font-weight: bold; color: rgb(232, 232, 240); transform: scaleX(1.14049);">TATISHVILI</div>
<div class="t" style="left: 271px; top: 635px; font-size: 6.5px; font-family: &quot;Liberation Serif&quot;, serif; font-weight: bold; color: rgb(232, 232, 240); transform: scaleX(1.10039);">1884-1946</div>

<!-- thumb 13 -->
<div class="a" style="left:193px;top:719px;width:127px;height:59px;background:#9a9a9a"></div>
<div class="a" style="left:196px;top:721px;width:122px;height:57px;background:linear-gradient(#020a24 0%,#04276f 30%,#0533a3 60%,#0533a3 100%)"></div>
<svg style="left:196px;top:741px;overflow:hidden" width="35" height="37"><rect width="35" height="37" fill="#dcdcdc"></rect><g filter="url(#bl1)"><path d="M8 14C8 6 13 3 18 3s10 3 10 10v3H8z" fill="#2a2a2a"></path><path d="M10 14c0-5 4-8 8-8s8 3 8 8v6c0 6-4 9-8 9s-8-3-8-9z" fill="#b0b0b0"></path><path d="M13 15h4M20 15h4" stroke="#333" stroke-width="1.2"></path><path d="M0 37c2-6 8-9 18-9s16 3 17 9z" fill="#2e2e2e"></path><path d="M15 29l3 8 3-8z" fill="#e8e8e8"></path></g></svg>
<div class="a" style="left:230px;top:734px;width:83px;height:44px;border:1px solid #3aa0d8;border-bottom:none"></div>
<div class="t" style="left: 225.5px; top: 725px; font-size: 7px; font-family: &quot;Liberation Serif&quot;, serif; font-weight: bold; color: rgb(221, 221, 238); transform: scaleX(1.04918);">Givi Gachechiladze</div>
<div class="a" style="left:232.5px;top:736.5px;width:2px;height:2px;background:#e8c840"></div>
<div class="t" style="left: 237px; top: 734.2px; font-family: &quot;Liberation Serif&quot;, serif; font-weight: bold; font-size: 5.2px; color: rgb(228, 232, 248); transform: scaleX(1.04685);">Much Ado about Nothing</div>
<div class="a" style="left:232.5px;top:745.0px;width:2px;height:2px;background:#e8c840"></div>
<div class="t" style="left: 237px; top: 742.7px; font-family: &quot;Liberation Serif&quot;, serif; font-weight: bold; font-size: 5.2px; color: rgb(228, 232, 248); transform: scaleX(1.038);">The Two Gentlemen of Verona</div>
<div class="a" style="left:232.5px;top:751.0px;width:2px;height:2px;background:#e8c840"></div>
<div class="t" style="left: 237px; top: 748.7px; font-family: &quot;Liberation Serif&quot;, serif; font-weight: bold; font-size: 5.2px; color: rgb(228, 232, 248); transform: scaleX(1.11978);">King John</div>
<div class="a" style="left:232.5px;top:758.7px;width:2px;height:2px;background:#e8c840"></div>
<div class="t" style="left: 237px; top: 756.4px; font-family: &quot;Liberation Serif&quot;, serif; font-weight: bold; font-size: 5.2px; color: rgb(228, 232, 248); transform: scaleX(1.19149);">Richard II</div>
<div class="a" style="left:232.5px;top:767.0px;width:2px;height:2px;background:#e8c840"></div>
<div class="t" style="left: 237px; top: 764.7px; font-family: &quot;Liberation Serif&quot;, serif; font-weight: bold; font-size: 5.2px; color: rgb(228, 232, 248); transform: scaleX(1.15315);">Henry V</div>
<div class="a" style="left:232.5px;top:774.5px;width:2px;height:2px;background:#e8c840"></div>
<div class="t" style="left: 237px; top: 772.2px; font-family: &quot;Liberation Serif&quot;, serif; font-weight: bold; font-size: 5.2px; color: rgb(228, 232, 248); transform: scaleX(1.02522);">Troilus and Cressida</div>
<!-- cursor -->
<svg style="left:292px;top:733px" width="12" height="17"><path d="M0.5 0.5v14l3.5-3.5 2.5 5.5 2-1-2.5-5.5h5z" fill="#fff" stroke="#222" stroke-width=".9"></path></svg>

<!-- right scrollbar -->
<div class="a" style="left:1423px;top:267px;width:14px;height:457px;background:#f0f0f0"></div>
<div class="a" style="left:1423px;top:268px;width:14px;height:14px;background:#fff;border:1px solid #c6c6c6"></div>
<svg style="left:1426px;top:272px" width="8" height="5"><path d="M0 4.5L4 0.5 8 4.5z" fill="#222"></path></svg>
<div class="a" style="left:1423px;top:468px;width:14px;height:27px;background:#fff;border:1px solid #c6c6c6"></div>
<div class="a" style="left:1423px;top:709px;width:14px;height:14px;background:#fff;border:1px solid #c6c6c6"></div>
<svg style="left:1426px;top:714px" width="8" height="5"><path d="M0 0.5L4 4.5 8 0.5z" fill="#222"></path></svg>
<svg style="left:1426px;top:726px" width="9" height="28"><path d="M4.5 .5L8 5H6.5L8.5 8.5H.5L2.5 5H1z" fill="#6a6a6a"></path><path d="M.5 9.5h8v1.5h-8z" fill="#6a6a6a"></path><path d="M.5 17h8v1.5h-8zM.5 19.5h8L6.5 22.5H8L4.5 27 1 22.5h1.5z" fill="#6a6a6a"></path></svg>
<!-- main slide -->
<div class="a" style="left:568px;top:278px;width:645px;height:484px;background:linear-gradient(#010514 0%,#021038 4%,#041d5e 10%,#05266f 18%,#052c86 28%,#053196 40%,#05339c 60%,#05339c 100%)"></div>
<svg style="left:870px;top:278px" width="343" height="484"><g fill="none" stroke="#04288a" stroke-width="6" opacity=".3" filter="url(#bl3)"><path d="M140 378c40-10 80-25 130-30"></path><path d="M100 498"></path><path d="M200 440c50-10 100-25 143-35"></path><path d="M120 470c40-6 60-10 90-18"></path><path d="M250 320c20-5 50-10 90-18"></path></g></svg>
<!-- photo -->
<svg style="left:581px;top:288px;overflow:hidden" width="289" height="473"><use href="#photoSym"></use></svg>
<div class="t" style="left: 967.5px; top: 319.5px; font-size: 39px; font-family: &quot;Liberation Serif&quot;, serif; font-weight: bold; color: rgb(231, 234, 252); text-shadow: rgb(2, 10, 48) 2px 2px 2px; transform: scaleX(0.993464);">EREKLE</div>
<div class="t" style="left: 933.3px; top: 366px; font-size: 39px; font-family: &quot;Liberation Serif&quot;, serif; font-weight: bold; color: rgb(231, 234, 252); text-shadow: rgb(2, 10, 48) 2px 2px 2px; transform: scaleX(1.01264);">TATISHVILI</div>
<div class="t" style="left: 972.5px; top: 414.5px; font-size: 39px; font-family: &quot;Liberation Serif&quot;, serif; font-weight: bold; color: rgb(231, 234, 252); text-shadow: rgb(2, 10, 48) 2px 2px 2px; transform: scaleX(0.908284);">1884-1946</div>

<!-- status bar -->
<div class="a" style="left:162px;top:777px;width:1276px;height:1px;background:#d0d0d0"></div>
<div class="a" style="left:162px;top:778px;width:1276px;height:21px;background:#f3f3f3"></div>
<div class="t" style="left: 173px; top: 784px; font-size: 10.5px; color: rgb(68, 68, 68); transform: scaleX(1.01217);">Slide 12 of 24</div>
<svg style="left:255px;top:781px" width="14" height="13"><path d="M6 1.5C4 .5 2 .5.5 1.5v10c1.5-1 3.5-1 5.5 0 2-1 4-1 5.5 0v-3" stroke="#666" stroke-width=".9" fill="none"></path><path d="M6 1.5v10" stroke="#666" stroke-width=".9"></path><path d="M9 3l4 4M13 3l-4 4" stroke="#666" stroke-width=".9"></path></svg>
<div class="t" style="left: 285.5px; top: 784px; font-size: 10.5px; color: rgb(68, 68, 68); transform: scaleX(1.00102);">English (United States)</div>
<svg style="left:422px;top:781px" width="14" height="14"><path d="M5 .5v3M2 2.5a5 5 0 1 0 8 0" stroke="#444" stroke-width="1.1" fill="none" stroke-dasharray="2 1"></path><path d="M7 7l6 6M13 7l-6 6" stroke="#222" stroke-width="1.2"></path></svg>
<div class="t" style="left: 439.7px; top: 784px; font-size: 10.5px; font-weight: bold; color: rgb(51, 51, 51); transform: scaleX(0.934894);">Accessibility: Investigate</div>
<svg style="left:957px;top:782px" width="12" height="11"><path d="M3 3L6 .5 9 3z" fill="#555"></path><path d="M0 5.5h12M0 8h12M0 10.5h12" stroke="#666" stroke-width="1"></path></svg>
<div class="t" style="left: 973.4px; top: 784px; font-size: 10.5px; color: rgb(68, 68, 68); transform: scaleX(0.969476);">Notes</div>
<svg style="left:1019px;top:780px" width="14" height="13"><path d="M0 0h13v9H5l-3 3V9H0z" fill="#555"></path></svg>
<div class="t" style="left: 1035px; top: 784px; font-size: 10.5px; color: rgb(68, 68, 68); transform: scaleX(0.984918);">Comments</div>
<div class="a" style="left:1104px;top:778px;width:36.6px;height:21px;background:#c8c8c8"></div>
<svg style="left:1116px;top:781px" width="14" height="13"><rect x=".5" y=".5" width="13" height="11" fill="none" stroke="#555"></rect><rect x="3" y="3" width="8" height="5" fill="none" stroke="#555"></rect></svg>
<svg style="left:1152px;top:781px" width="15" height="13"><path d="M.5 .5h5v4.5h-5zM9 .5h5v4.5H9zM.5 7.5h5V12h-5zM9 7.5h5V12H9z" fill="none" stroke="#555"></path></svg>
<svg style="left:1190px;top:781px" width="14" height="13"><path d="M.5 1.5c2-1 4.5-1 6.5 1 2-2 4.5-2 6.5-1v10c-2-1-4.5-1-6.5 1-2-2-4.5-2-6.5-1zM7 2.5v10M2 4h3M2 6h3M2 8h3M9 4h3M9 6h3M9 8h3" fill="none" stroke="#555" stroke-width=".9"></path></svg>
<svg style="left:1227px;top:781px" width="14" height="13"><path d="M.5 .5h13M1.5 .5v7h11v-7M7 7.5v3M4 12.5l3-2 3 2" fill="none" stroke="#555"></path><rect x="3" y="2.5" width="8" height="3" fill="#888"></rect></svg>
<div class="a" style="left:1259px;top:788px;width:7px;height:1px;background:#555"></div>
<div class="a" style="left:1270.5px;top:788px;width:93px;height:1px;background:#777"></div>
<div class="a" style="left:1302px;top:783px;width:4px;height:10px;background:#444"></div>
<div class="a" style="left:1317px;top:786px;width:1px;height:5px;background:#777"></div>
<svg style="left:1368px;top:784px" width="8" height="8"><path d="M4 0v8M0 4h8" stroke="#555"></path></svg>
<div class="t" style="left: 1388.4px; top: 784px; font-size: 10.5px; color: rgb(68, 68, 68); transform: scaleX(0.932639);">72%</div>
<svg style="left:1420px;top:782px" width="13" height="13"><rect x=".5" y=".5" width="12" height="12" fill="none" stroke="#666"></rect><path d="M6.5 1.5v3M6.5 8.5v3M1.5 6.5h3M8.5 6.5h3" stroke="#555"></path></svg>
<!-- ================= left overlay: shield + recording ================= -->
<div class="a" style="left:9px;top:127px;width:22px;height:23px;border-radius:5px;background:#1f1f1f"></div>
<svg style="left:13px;top:132px" width="14" height="15"><path d="M7 .5L13 3v4.5c0 3.5-2.5 6-6 7-3.5-1-6-3.5-6-7V3z" fill="#23c15a"></path><path d="M4 7.5l2.2 2.2L10 5.8" stroke="#0e0e0e" stroke-width="1.6" fill="none"></path></svg>
<div class="a" style="left:40px;top:127px;width:195px;height:23px;border-radius:7px;background:rgba(33,33,33,.78)"></div>
<div class="a" style="left:49px;top:132px;width:14px;height:14px;border-radius:50%;background:#fff"></div>
<div class="a" style="left:52.5px;top:135.5px;width:7px;height:7px;border-radius:50%;background:#e02828"></div>
<div class="t" style="left: 102px; top: 132.5px; font-size: 12.5px; color: rgb(232, 232, 232); transform: scaleX(0.923451);">Запись...</div>
<svg style="left:182px;top:128px" width="14" height="14"><path d="M.8 .8h12.4v12.4H.8z" stroke="#5a5a5a" stroke-width="1.1" fill="none"></path><path d="M3.5 13V8.5h7V13" stroke="#5a5a5a" stroke-width="1" fill="none"></path></svg>
<svg style="left:210px;top:127px" width="16" height="10"><path d="M1.5 4.5h9a4 4 0 0 1 4 4" stroke="#5a5a5a" stroke-width="1.2" fill="none"></path><path d="M4.5 1L1 4.5 4.5 8" stroke="#5a5a5a" stroke-width="1.2" fill="none"></path></svg>
<svg style="left:229px;top:133px" width="6" height="4"><path d="M.5 .5L3 3 5.5 .5" stroke="#5a5a5a" fill="none"></path></svg>
<div class="a" style="left:195px;top:135px;width:2.6px;height:8px;background:#f0f0f0"></div>
<div class="a" style="left:201.2px;top:135px;width:2.6px;height:8px;background:#f0f0f0"></div>
<div class="a" style="left:218.5px;top:135px;width:9px;height:8.5px;border-radius:2px;background:#f8f8f8"></div>

<!-- annotation pencil button -->
<div class="a" style="left:12px;top:747px;width:40px;height:40px;border-radius:50%;background:#15161a;border:1px solid #2c2f35"></div>
<svg style="left:24px;top:758px" width="16" height="17"><path d="M3.2 14.6c-1.2.3-1.8-.3-1.5-1.5.3-1.2 1-2.2 1.8-3L11.3 2.4a1.2 1.2 0 0 1 1.7 0l1.1 1.1a1.2 1.2 0 0 1 0 1.7L6.2 12.8c-.8.8-1.8 1.5-3 1.8z" stroke="#22c55e" stroke-width="1.4" fill="none"></path><path d="M10 3.8l2.7 2.7" stroke="#22c55e" stroke-width="1.3"></path></svg>

<!-- ================= Zoom toolbar ================= -->
<!-- mic -->
<svg style="left:38px;top:804px" width="26" height="25"><path d="M10 2.5a3 3 0 0 1 6 0v9a3 3 0 0 1-6 0z" fill="#b8b8b8"></path><path d="M7 10.5a6 6 0 0 0 12 0M13 16.5v4M9.5 21h7" stroke="#b8b8b8" stroke-width="1.6" fill="none"></path><path d="M1.5 23.5L24 1.5" stroke="#e0443e" stroke-width="1.6"></path></svg>
<svg style="left:84px;top:813px" width="9" height="6"><path d="M1 5L4.5 1.5 8 5" stroke="#bbb" stroke-width="1.3" fill="none"></path></svg>
<div class="t zt" style="left: 10px; top: 832.5px; transform: scaleX(0.995502);">Включить звук</div>
<!-- video -->
<svg style="left:147px;top:808px" width="26" height="15"><rect x="0" y="0.5" width="18" height="14" rx="3" fill="#b8b8b8"></rect><path d="M19 5l6-4v13l-6-4z" fill="#b8b8b8"></path></svg>
<svg style="left:202px;top:813px" width="9" height="6"><path d="M1 5L4.5 1.5 8 5" stroke="#bbb" stroke-width="1.3" fill="none"></path></svg>
<div class="t zt" style="left: 108.7px; top: 832.5px; transform: scaleX(0.957466);">Остановить видео</div>
<!-- participants -->
<svg style="left:420px;top:807px" width="26" height="18"><circle cx="8" cy="4.5" r="4" fill="#b8b8b8"></circle><path d="M0 17c0-5 3.5-7.5 8-7.5s8 2.5 8 7.5z" fill="#b8b8b8"></path><circle cx="18.5" cy="5.5" r="3.5" fill="#b8b8b8"></circle><path d="M17 10c5 0 8.5 2 8.5 7H17.5c0-3-.5-5-2-6.5z" fill="#b8b8b8"></path></svg>
<div class="t" style="left: 449px; top: 808px; font-size: 12.5px; color: rgb(214, 219, 227); transform: scaleX(1.00674);">55</div>
<svg style="left:482px;top:813px" width="9" height="6"><path d="M1 5L4.5 1.5 8 5" stroke="#bbb" stroke-width="1.3" fill="none"></path></svg>
<div class="t zt" style="left: 404px; top: 832.5px; transform: scaleX(0.971219);">Участники</div>
<!-- chat -->
<svg style="left:532px;top:807px" width="22" height="20"><path d="M3 .5h16a2.5 2.5 0 0 1 2.5 2.5v9a2.5 2.5 0 0 1-2.5 2.5H9l-5 4.5v-4.5H3A2.5 2.5 0 0 1 .5 12V3A2.5 2.5 0 0 1 3 .5z" fill="#b8b8b8"></path></svg>
<svg style="left:572px;top:813px" width="9" height="6"><path d="M1 5L4.5 1.5 8 5" stroke="#bbb" stroke-width="1.3" fill="none"></path></svg>
<div class="t zt" style="left: 532.8px; top: 832.5px; transform: scaleX(0.925998);">Чат</div>
<!-- share -->
<div class="a" style="left:645px;top:807px;width:24px;height:18px;border-radius:3px;background:#22c55e"></div>
<svg style="left:652px;top:810px" width="10" height="12"><path d="M5 11V2M1.5 5L5 1.5 8.5 5" stroke="#0a1a10" stroke-width="2" fill="none"></path></svg>
<div class="t zt" style="left: 596px; top: 832.5px; color: rgb(34, 197, 94); transform: scaleX(0.96137);">Демонстрация экрана</div>
<!-- summary -->
<svg style="left:757px;top:804px" width="21" height="23"><path d="M2.5 .5h11l6.5 6.5v13.5a2 2 0 0 1-2 2h-15.5a2 2 0 0 1-2-2v-18a2 2 0 0 1 2-2z" fill="#b8b8b8"></path><path d="M9 8l1.3 3.2L13.5 12.5l-3.2 1.3L9 17l-1.3-3.2L4.5 12.5l3.2-1.3z" fill="#1a1a1a"></path><path d="M14 13.5l.6 1.4 1.4.6-1.4.6-.6 1.4-.6-1.4-1.4-.6 1.4-.6z" fill="#1a1a1a"></path></svg>
<div class="t zt" style="left: 746.8px; top: 832.5px; transform: scaleX(0.947797);">Сводка</div>
<!-- pause/stop rec -->
<div class="a" style="left:864px;top:804px;width:20px;height:20px;border-radius:3px;background:#bdbdbd"></div>
<div class="a" style="left:870px;top:809px;width:3px;height:10px;background:#1a1a1a"></div>
<div class="a" style="left:875px;top:809px;width:3px;height:10px;background:#1a1a1a"></div>
<div class="a" style="left:889px;top:804px;width:20px;height:20px;border-radius:3px;background:#bdbdbd"></div>
<div class="a" style="left:894px;top:809px;width:10px;height:10px;background:#1a1a1a;border-radius:1px"></div>
<div class="t zt" style="left: 815px; top: 834px; transform: scaleX(0.970422);">Пауза/остановить запись</div>
<!-- reactions -->
<svg style="left:995px;top:803px" width="22" height="23"><circle cx="10" cy="13" r="9" fill="#b8b8b8"></circle><circle cx="7" cy="11.5" r="1.3" fill="#1a1a1a"></circle><circle cx="13" cy="11.5" r="1.3" fill="#1a1a1a"></circle><path d="M6 15a4.5 4.5 0 0 0 8 0" stroke="#1a1a1a" stroke-width="1.4" fill="none"></path><path d="M18 .5v6M15 3.5h6" stroke="#b8b8b8" stroke-width="1.4"></path></svg>
<svg style="left:1029px;top:813px" width="9" height="6"><path d="M1 5L4.5 1.5 8 5" stroke="#bbb" stroke-width="1.3" fill="none"></path></svg>
<div class="t zt" style="left: 982.4px; top: 832.5px; transform: scaleX(0.94416);">Реакции</div>
<!-- apps -->
<svg style="left:1080px;top:807px" width="19" height="19"><path d="M1 6V3a2 2 0 0 1 2-2h3M13 18h3a2 2 0 0 0 2-2v-3M1 13v3a2 2 0 0 0 2 2h1" stroke="#b8b8b8" stroke-width="1.6" fill="none"></path><circle cx="14.5" cy="4.5" r="2.8" stroke="#b8b8b8" stroke-width="1.6" fill="none"></circle><circle cx="4.5" cy="14.5" r="2.8" stroke="#b8b8b8" stroke-width="1.6" fill="none"></circle></svg>
<div class="t zt" style="left: 1053px; top: 832.5px; transform: scaleX(0.998077);">Приложения</div>
<!-- boards -->
<svg style="left:1182px;top:806px" width="22" height="19"><rect x="1" y="1" width="19" height="14" rx="2" stroke="#b8b8b8" stroke-width="1.6" fill="none"></rect><rect x="9" y="13" width="12" height="5" rx="2" fill="#b8b8b8"></rect></svg>
<div class="t zt" style="left: 1142px; top: 832.5px; transform: scaleX(0.988791);">Доски сообщений</div>
<!-- notes -->
<svg style="left:1293px;top:806px" width="19" height="21"><path d="M3 1h10a2 2 0 0 1 2 2v13H3a2 2 0 0 1-2-2V3a2 2 0 0 1 2-2z" stroke="#b8b8b8" stroke-width="1.6" fill="none"></path><path d="M4.5 5h7M4.5 8h7M4.5 11h5" stroke="#b8b8b8" stroke-width="1.3"></path><rect x="6" y="16" width="12" height="4" rx="2" fill="#b8b8b8"></rect></svg>
<div class="t zt" style="left: 1265.5px; top: 832.5px; transform: scaleX(0.976835);">Примечания</div>
<!-- leave -->
<div class="a" style="left:1526px;top:812px;width:62px;height:27px;border-radius:6px;background:#b92b27"></div>
<div class="t" style="left: 1537.5px; top: 818.5px; font-size: 12.5px; font-weight: bold; color: rgb(255, 255, 255); transform: scaleX(0.92226);">Выйти</div>
<!-- ================= taskbar ================= -->
<div class="a" style="left:0;top:852px;width:1600px;height:48px;background:#e9ddd5"></div>
<div class="a" style="left:0;top:852px;width:1600px;height:1px;background:#d9cec7"></div>
<!-- weather -->
<div class="a" style="left:21px;top:865px;width:20px;height:20px;border-radius:50%;background:radial-gradient(circle at 40% 35%,#ffc640,#f7901e 75%)"></div>
<div class="a" style="left:29px;top:876px;width:13px;height:7px;border-radius:4px;background:#cfe2f7"></div>
<div class="a" style="left:32px;top:873px;width:7px;height:7px;border-radius:50%;background:#cfe2f7"></div>
<div class="t" style="left: 50px; top: 862px; font-size: 12px; color: rgb(26, 26, 26); transform: scaleX(0.932401);">22°C</div>
<div class="t" style="left: 50px; top: 877px; font-size: 12px; color: rgb(68, 68, 68); transform: scaleX(1.01383);">Mostly sunny</div>
<!-- windows logo -->
<svg style="left:434px;top:864px" width="25" height="25"><defs><linearGradient id="wl" x1="0" y1="0" x2="1" y2="1"><stop offset="0" stop-color="#3ccaf5"></stop><stop offset="1" stop-color="#0a73d0"></stop></linearGradient></defs><path d="M0 0h11.5v11.5H0zM12.5 0H24v11.5H12.5zM0 12.5h11.5V24H0zM12.5 12.5H24V24H12.5z" fill="url(#wl)"></path></svg>
<!-- search -->
<div class="a" style="left:472px;top:861px;width:218px;height:30px;border-radius:15px;background:#f8f3ef;border:1px solid #ddd3cc"></div>
<svg style="left:482px;top:867px" width="17" height="17"><circle cx="7" cy="7" r="5.5" stroke="#1a1a1a" stroke-width="1.8" fill="none"></circle><path d="M11 11l4.5 4.5" stroke="#1a1a1a" stroke-width="2"></path></svg>
<div class="t" style="left: 508px; top: 870px; font-size: 13.5px; color: rgb(85, 85, 85); transform: scaleX(1.05553);">Поиск</div>
<!-- task view -->
<svg style="left:702px;top:864px" width="26" height="24"><rect x="8" y="0" width="17" height="17" rx="2" fill="#f5f5f5" stroke="#ccc" stroke-width=".6"></rect><rect x="0.5" y="7" width="17" height="16.5" rx="2" fill="#2b2b2b"></rect><rect x="8" y="7" width="9.5" height="10" fill="#b8b8b8"></rect></svg>
<!-- edge -->
<svg style="left:746px;top:863px" width="25" height="25"><defs><linearGradient id="eg" x1="0" y1="0" x2="1" y2="1"><stop offset="0" stop-color="#37c6a0"></stop><stop offset="0.5" stop-color="#1b9de2"></stop><stop offset="1" stop-color="#0c59a4"></stop></linearGradient></defs><circle cx="12.5" cy="12.5" r="12" fill="url(#eg)"></circle><path d="M6 14c0-5 4-8 8-8s6 3 6 5c0 2-2 3-5 3h-4c0 3 3 5 6 5 2 0 4-.5 5-1.5-1.5 3-5 5-8.5 5C8.5 22.5 6 18.5 6 14z" fill="#fff" opacity=".9"></path></svg>
<div class="a" style="left:756px;top:892px;width:6px;height:3px;border-radius:2px;background:#6a6a6a"></div>
<!-- folder -->
<svg style="left:790px;top:865px" width="25" height="21"><path d="M0 2a2 2 0 0 1 2-2h7l2.5 3H23a2 2 0 0 1 2 2v14a2 2 0 0 1-2 2H2a2 2 0 0 1-2-2z" fill="#f3b92d"></path><rect x="0" y="5" width="25" height="16" rx="1.5" fill="#fcd45a"></rect><rect x="6" y="12" width="13" height="6" rx="1.5" fill="#1d8be0"></rect></svg>
<!-- mail -->
<svg style="left:834px;top:864px" width="26" height="23"><path d="M0 8L13 0l13 8v15H0z" fill="#1478cf"></path><path d="M0 8l13 9 13-9v15H0z" fill="#41b5f0"></path><path d="M0 23l13-8 13 8z" fill="#2d9be5"></path></svg>
<!-- WPS -->
<div class="a" style="left:879px;top:864px;width:24px;height:24px;border-radius:50%;background:#e8412c"></div>
<svg style="left:883px;top:870px" width="16" height="11"><path d="M1 1l3.5 9 3.5-6 3.5 6L15 1" stroke="#fff" stroke-width="2.2" fill="none"></path></svg>
<!-- teams -->
<svg style="left:922px;top:863px" width="26" height="25"><circle cx="15" cy="4.5" r="3.5" fill="#7b83eb"></circle><circle cx="22" cy="6" r="2.5" fill="#5059c9"></circle><rect x="10" y="9" width="11" height="14" rx="4" fill="#7b83eb"></rect><path d="M19 10h6v8a3 3 0 0 1-5 2z" fill="#5059c9"></path><rect x="0.5" y="7" width="13" height="13" rx="1" fill="#fff" stroke="#ccc" stroke-width=".5"></rect><path d="M3 10h8M7 10v8" stroke="#4b53bc" stroke-width="2.2"></path></svg>
<!-- chrome + avatar -->
<svg style="left:967px;top:864px" width="25" height="25"><use href="#chrome"></use></svg>
<div class="a" style="left:980px;top:859px;width:16px;height:16px;border-radius:50%;background:radial-gradient(circle at 50% 40%,#e8eef0,#8a8e90 60%,#4a4c50)"></div>
<div class="a" style="left:976px;top:892px;width:6px;height:3px;border-radius:2px;background:#6a6a6a"></div>
<!-- skype -->
<div class="a" style="left:1011px;top:864px;width:23px;height:23px;border-radius:50%;background:#1aa1e6"></div>
<div class="t" style="left: 1016px; top: 866px; font-size: 18px; font-weight: bold; color: rgb(255, 255, 255); transform: scaleX(0.9987);">S</div>
<div class="a" style="left:1020px;top:892px;width:6px;height:3px;border-radius:2px;background:#6a6a6a"></div>
<!-- chrome -->
<svg style="left:1054px;top:864px" width="25" height="25"><use href="#chrome"></use></svg>
<div class="a" style="left:1064px;top:892px;width:6px;height:3px;border-radius:2px;background:#6a6a6a"></div>
<!-- zoom active -->
<div class="a" style="left:1092px;top:857px;width:35px;height:38px;border-radius:5px;background:#f5ede8;border:1px solid #e6dad2"></div>
<div class="a" style="left:1099px;top:864px;width:24px;height:24px;border-radius:50%;background:linear-gradient(#3a7bff,#0b4fe0)"></div>
<div class="t" style="left: 1102.5px; top: 871px; font-size: 10px; font-weight: bold; color: rgb(255, 255, 255); transform: scaleX(1.22247);">zm</div>
<div class="a" style="left:1102.5px;top:891px;width:16.5px;height:3px;border-radius:2px;background:#1a6fd8"></div>
<!-- copilot/designer -->
<svg style="left:1143px;top:865px" width="24" height="22"><circle cx="17" cy="3.5" r="3" fill="#f8b51c"></circle><path d="M0 21L7 8l5 8 4-6 7 11z" fill="#8a67e8"></path><path d="M7 8l5 8-3 5H0z" fill="#b59af5"></path></svg>
<div class="a" style="left:1152px;top:892px;width:6px;height:3px;border-radius:2px;background:#6a6a6a"></div>
<!-- tray -->
<svg style="left:1241px;top:871px" width="12" height="7"><path d="M1 6L6 1l5 5" stroke="#1a1a1a" stroke-width="1.4" fill="none"></path></svg>
<svg style="left:1270px;top:867px" width="19" height="19"><path d="M3 7a6.5 6.5 0 0 1 11-3M16 11a6.5 6.5 0 0 1-11 3" stroke="#1a1a1a" stroke-width="1.4" fill="none"></path><path d="M14.5 1v4h-4M4.5 17.5v-4h4" stroke="#1a1a1a" stroke-width="1.4" fill="none"></path><circle cx="13.5" cy="14.5" r="4" fill="#f7941d"></circle></svg>
<svg style="left:1305px;top:866px" width="13" height="20"><rect x="3.5" y="1" width="6" height="11" rx="3" stroke="#1a62c8" stroke-width="1.5" fill="none"></rect><path d="M1 9a5.5 5.5 0 0 0 11 0M6.5 14.5v4" stroke="#1a62c8" stroke-width="1.5" fill="none"></path></svg>
<div class="t" style="left: 1338.5px; top: 871px; font-size: 12px; color: rgb(26, 26, 26); transform: scaleX(0.950276);">УКР</div>
<svg style="left:1379px;top:868px" width="17" height="14"><path d="M1 5a11 11 0 0 1 15 0M3.5 8a7.5 7.5 0 0 1 10 0M6 11a3.5 3.5 0 0 1 5 0" stroke="#1a1a1a" stroke-width="1.4" fill="none"></path><circle cx="8.5" cy="12.5" r="1.2" fill="#1a1a1a"></circle></svg>
<svg style="left:1402px;top:867px" width="18" height="16"><path d="M1 5h3l5-4v14l-5-4H1z" stroke="#1a1a1a" stroke-width="1.2" fill="none"></path><path d="M11.5 5a4 4 0 0 1 0 6M13.5 3a7 7 0 0 1 0 10M15.5 1.5a9.5 9.5 0 0 1 0 13" stroke="#1a1a1a" stroke-width="1.2" fill="none"></path></svg>
<svg style="left:1426px;top:867px" width="17" height="16"><rect x="1" y="4" width="14" height="10" rx="1.5" stroke="#1a1a1a" stroke-width="1.3" fill="none"></rect><path d="M15.5 7v4" stroke="#1a1a1a" stroke-width="1.5"></path><path d="M3 4l3-3.5M3 6h8v6H3z" stroke="#1a1a1a" fill="#1a1a1a"></path></svg>
<div class="t" style="left: 1488px; top: 862.5px; font-size: 12px; color: rgb(26, 26, 26); transform: scaleX(0.932362);">19:28</div>
<div class="t" style="left: 1459px; top: 877.5px; font-size: 12px; color: rgb(26, 26, 26); transform: scaleX(0.949011);">01.05.2024</div>
<svg style="left:1525px;top:867px" width="15" height="17"><path d="M7 2.5a4.5 4.5 0 0 0-4.5 4.5v4L1 13h12l-1.5-2V7A4.5 4.5 0 0 0 7 2.5zM5 14.5a2 2 0 0 0 4 0" stroke="#1a1a1a" stroke-width="1.2" fill="none"></path><text x="8" y="6" font-size="5" font-family="Liberation Sans" fill="#1a1a1a">zz</text></svg>
<svg style="left:1557px;top:865px" width="24" height="23"><defs><linearGradient id="cp" x1="0" y1="0" x2="1" y2="1"><stop offset="0" stop-color="#2bb0f5"></stop><stop offset=".5" stop-color="#5fd27a"></stop><stop offset="1" stop-color="#e85ad8"></stop></linearGradient></defs><path d="M5 1h10c3 0 5 3 6 6l2 7c1 3-1 5-4 5H8c-3 0-5-2-6-5L1 6c-.5-3 1-5 4-5z" fill="url(#cp)"></path><rect x="8" y="15" width="16" height="8" rx="1" fill="#f5c518"></rect><text x="9" y="22" font-size="6.5" font-weight="bold" font-family="Liberation Sans" fill="#1a1a1a">PRE</text></svg>


<svg width="0" height="0" style="position:absolute">
  <defs>
    <filter id="bl1" x="-20%" y="-20%" width="140%" height="140%"><feGaussianBlur stdDeviation=".8"></feGaussianBlur></filter>
    <filter id="bl2" x="-20%" y="-20%" width="140%" height="140%"><feGaussianBlur stdDeviation="1.6"></feGaussianBlur></filter>
    <filter id="bl3" x="-20%" y="-20%" width="140%" height="140%"><feGaussianBlur stdDeviation="3"></feGaussianBlur></filter>
    <filter id="bl4" x="-20%" y="-20%" width="140%" height="140%"><feGaussianBlur stdDeviation="8"></feGaussianBlur></filter>
    <g id="chrome"><circle cx="12.5" cy="12.5" r="12" fill="#db4437"></circle><path d="M12.5 12.5L2.1 6.5A12 12 0 0 0 12.5 24.5z" fill="#0f9d58"></path><path d="M12.5 12.5v12A12 12 0 0 0 22.9 6.5z" fill="#f4b400"></path><path d="M12.5 12.5L2.1 6.5A12 12 0 0 1 22.9 6.5z" fill="#db4437"></path><circle cx="12.5" cy="12.5" r="5.5" fill="#fff"></circle><circle cx="12.5" cy="12.5" r="4.3" fill="#4285f4"></circle></g>
    <symbol id="photoSym" viewBox="0 0 289 473">
  <defs>
    <clipPath id="pclip"><rect width="289" height="473"></rect></clipPath>
    <linearGradient id="pbg" x1="0" y1="0" x2="1" y2="0">
      <stop offset="0" stop-color="#c6a462"></stop>
      <stop offset="0.25" stop-color="#967240"></stop>
      <stop offset="0.6" stop-color="#7a5c30"></stop>
      <stop offset="1" stop-color="#5a4224"></stop>
    </linearGradient>
    <linearGradient id="suit" x1="0" y1="0" x2="1" y2="0.3">
      <stop offset="0" stop-color="#a08250"></stop>
      <stop offset="0.6" stop-color="#b89c68"></stop>
      <stop offset="1" stop-color="#c4a872"></stop>
    </linearGradient>
    <radialGradient id="face" cx="0.3" cy="0.35" r="0.8">
      <stop offset="0" stop-color="#ecdcb0"></stop>
      <stop offset="0.6" stop-color="#d8c090"></stop>
      <stop offset="1" stop-color="#b0925c"></stop>
    </radialGradient>
  </defs>
  <g clip-path="url(#pclip)">
  <rect width="289" height="473" fill="url(#pbg)"></rect>
  <g filter="url(#bl4)">
    <ellipse cx="30" cy="30" rx="70" ry="60" fill="#d4b272" opacity=".7"></ellipse>
    <path d="M-10 -10H30C24 40 20 120 18 220C16 300 10 420 12 480H-10z" fill="#d6b474" opacity=".85"></path>
    <ellipse cx="258" cy="190" rx="50" ry="120" fill="#4e3a22" opacity=".85"></ellipse>
    <ellipse cx="75" cy="370" rx="70" ry="170" fill="#7e6038" opacity=".75"></ellipse>
    <ellipse cx="160" cy="40" rx="100" ry="35" fill="#6e522a" opacity=".7"></ellipse>
  </g>
  <g filter="url(#bl2)">
    <!-- suit -->
    <path d="M232 206C255 226 280 250 289 273V473H40C60 420 95 350 127 288L131 256C140 272 148 288 156 296C185 268 210 240 232 206z" fill="url(#suit)"></path>
    <path d="M43 473L127 288L145 300C130 350 105 410 80 473z" fill="#c2a676" opacity=".7"></path>
    <path d="M86 454C130 400 175 350 214 308" stroke="#86693e" stroke-width="3" fill="none" opacity=".55"></path>
    <path d="M174 296C200 280 225 262 249 241" stroke="#86693e" stroke-width="3" fill="none" opacity=".55"></path>
    <path d="M214 308C240 350 250 400 252 473" stroke="#9a7e50" stroke-width="2" fill="none" opacity=".4"></path>
<!-- hair -->
    <path d="M106 88C112 70 132 54 157 49C195 52 228 70 244 104C252 128 246 150 232 168L212 160C200 148 192 140 186 128C176 104 166 86 154 66C135 70 118 78 106 88z" fill="#4a3822"></path>
    <path d="M160 62C185 64 215 80 232 110" stroke="#7a6446" stroke-width="4" fill="none" opacity=".6"></path><path d="M175 95C190 110 205 130 215 150" stroke="#3a2a18" stroke-width="5" fill="none" opacity=".5"></path>
    <!-- face -->
    <path d="M136 234C160 226 190 210 212 192L206 170C190 190 160 215 130 232z" fill="#a88858"></path>
    <path d="M108 81C100 92 96 100 96.3 106.7C95 114 93.5 118 93.5 121.8C94 130 95 135 94.5 139.3C92 148 89 154 88.9 159.9C90 165 95 168 99.8 169.7C97 172 94 175 94 177.8C97 185 102 189 103.3 193C103 200 103 208 104.5 214C107 222 112 227 117.3 228C124 231 130 233 136 232C160 220 185 200 204 176C208 166 200 152 194 141.7C190 134 187 130 185 125C180 115 175 105 171 97C167 90 164 84 161.7 78.7C158 72 155 68 152 67C140 68 134 70 129 71.7C120 74 113 77 108 81z" fill="url(#face)"></path>
    <path d="M150 150C165 170 175 190 170 215C160 222 148 228 136 232C158 210 162 180 150 150z" fill="#b8985e" opacity=".55"></path>
    <path d="M118 210C130 215 150 210 165 200" stroke="#b89a66" stroke-width="4" fill="none" opacity=".5"></path>
    <!-- ear -->
    <path d="M197 142C208 136 222 138 227 149C226 162 222 174 208 181C200 180 196 176 197 170C195 160 195 150 197 142z" fill="#d4b882"></path>
    <path d="M205 150C212 148 216 154 214 165" stroke="#9a8058" stroke-width="2" fill="none"></path>
    <!-- mustache -->
    <path d="M93 176C102 172 118 176 130 186C118 190 104 188 95 185z" fill="#5a4428" opacity=".85"></path>
    <!-- brow -->
    <path d="M96 118C108 112 125 110 140 116" stroke="#6a5536" stroke-width="3" fill="none"></path>
    <path d="M115 130C120 127 126 127 132 129" stroke="#5a4630" stroke-width="2" fill="none"></path>
    <!-- collar -->
    <path d="M129 236C165 226 200 208 222 193L228 210C208 238 182 268 156 294C146 285 136 270 131 256z" fill="#eee2c0"></path>
    <!-- tie -->
    <path d="M128 256C136 270 142 284 147 294C140 310 130 326 121 340C117 326 116 310 118 298z" fill="#3a2c1c"></path>
    </g>
  <g fill="none" stroke="#7a6a50" stroke-width="1.1">
    <ellipse cx="92" cy="136" rx="9" ry="7.5"></ellipse>
    <ellipse cx="127" cy="133" rx="11" ry="8"></ellipse>
    <path d="M101 135h15"></path>
  </g>
  <text x="2" y="414" font-family="Liberation Serif" font-style="italic" font-weight="bold" font-size="15" fill="#2a1e12" opacity=".85" textLength="56" lengthAdjust="spacingAndGlyphs">Mraxan</text>
  <path d="M2 419c14 2 34 1 56-3" stroke="#2a1e12" stroke-width="1.8" fill="none" opacity=".8"></path>
  <ellipse cx="37" cy="442" rx="6" ry="5" fill="#f2ead8"></ellipse>
  <path d="M238 0c-1 8 -3 14 -1 20-2 4-3 8-3 12" stroke="#e8dcc0" stroke-width=".9" fill="none" opacity=".8"></path>
  <rect x="0" y="468" width="289" height="5" fill="#f4f2ec"></rect>
  <rect x="0" y="0" width="1.2" height="473" fill="#efe6d0" opacity=".8"></rect><rect x="0" y="0" width="289" height="1" fill="#e8dcc0" opacity=".6"></rect>
  </g>
</symbol>
    <g id="mute"><path d="M7 .8c1.6 0 2.8 1.2 2.8 2.8 0 1.2-.5 2-1.1 2.6.6.6.9 1.3.9 2 0 1.3-1 2.3-2.6 2.3S4.4 9.5 4.4 8.2c0-.7.3-1.4.9-2-.6-.6-1.1-1.4-1.1-2.6C4.2 2 5.4.8 7 .8z" fill="#f05b5b"></path><path d="M4.6 12.4h5.2" stroke="#f05b5b" stroke-width="1.3"></path><path d="M7 10.5v2" stroke="#f05b5b" stroke-width="1.2"></path><path d="M.6 13.3L13.6.6" stroke="#2b2b2b" stroke-width="2.6"></path><path d="M.6 13.3L13.6.6" stroke="#f05b5b" stroke-width="1.3"></path></g>
  </defs>
</svg>



</body></html>
